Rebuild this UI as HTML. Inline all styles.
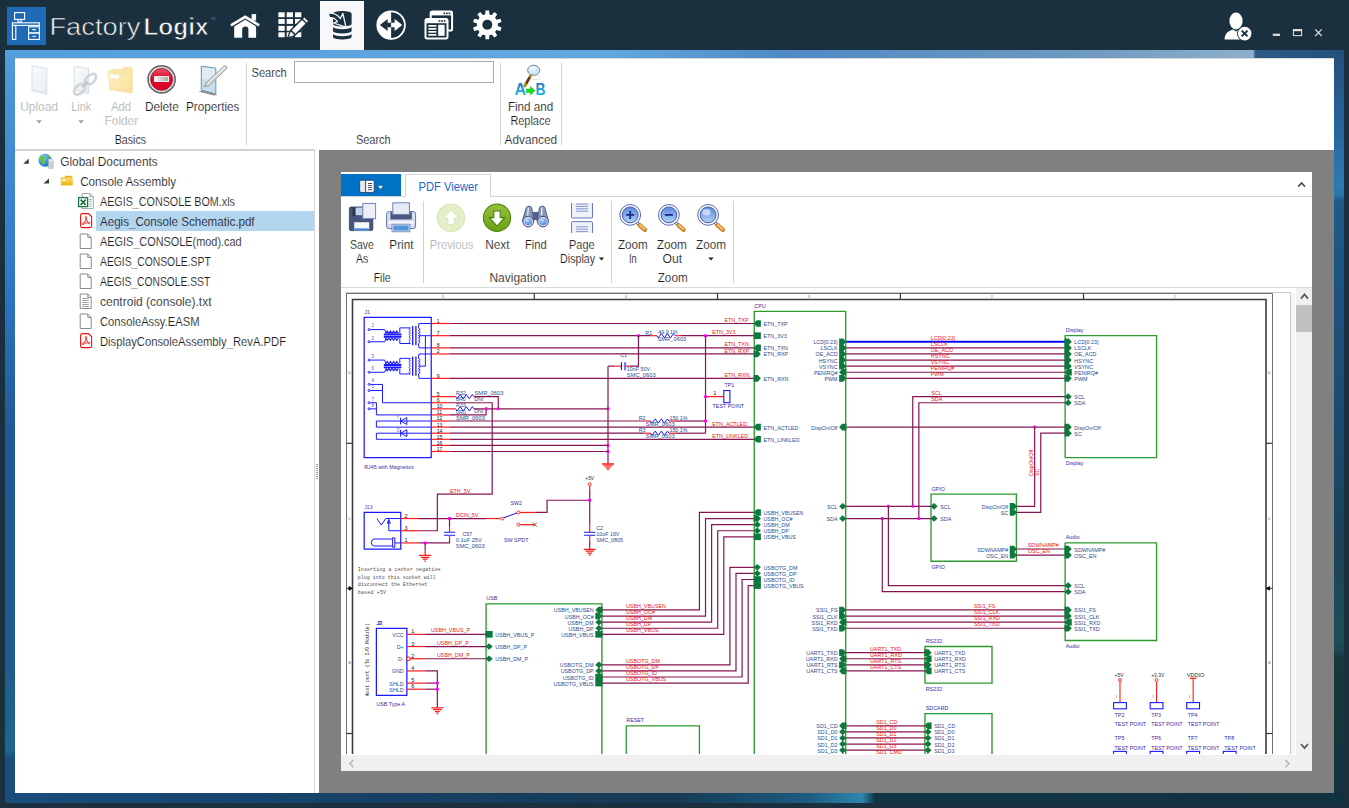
<!DOCTYPE html>
<html lang="en"><head><meta charset="utf-8"><title>FactoryLogix - Global Documents</title>
<style>
html,body{margin:0;padding:0;}
body{width:1349px;height:808px;overflow:hidden;background:#1a303e;font-family:"Liberation Sans",sans-serif;position:relative;}
.abs{position:absolute;}
#frame{left:5px;top:50px;width:1339px;height:753px;background:
 linear-gradient(180deg,rgba(0,0,0,0) 0%,rgba(8,30,50,.35) 45%,rgba(10,35,50,.78) 100%),
 linear-gradient(90deg,#549fde 0%,#63a8df 45%,#4f8ac6 58%,#6e99c0 80%,#8db0cc 93.2%,#2c5a86 93.4%,#24507c 100%);}
#frameL{left:5px;top:58px;width:10px;height:745px;background:linear-gradient(180deg,#4f9bdc 0%,#2f77c4 30%,#1f5a96 50%,#1d5c8c 80%,#1f6590 93%,#184d7c 94%,#184d7c 100%);}
#frameR{left:1334px;top:58px;width:10px;height:745px;background:linear-gradient(180deg,#25507d 0%,#27619a 8%,#2b7ab0 17%,#2a76ac 18.4%,#1f5a88 19.2%,#1c4f78 40%,#1b4a70 50%,#1a4258 65%,#1e4e56 78%,#1c4850 79.5%,#17383f 80.5%,#13323c 100%);}
#frameB{left:5px;top:793px;width:1339px;height:10px;background:linear-gradient(90deg,#184d7c 0%,#173f63 30%,#153a55 50%,#1d5c80 60%,#2f86ad 64%,#123546 65%,#10323f 100%);}
#content{left:15px;top:58px;width:1319px;height:735px;background:#fff;}
#grey{left:319px;top:150px;width:1015px;height:643px;background:#808080;}
#tree{left:15px;top:149px;width:299px;height:642px;background:#fff;border-top:2px solid #d2d2d2;border-right:1px solid #d6d6d6;box-sizing:content-box;}
#sel{left:96px;top:211px;width:218px;height:20px;background:#b4d5ee;}
#viewer{left:341px;top:172px;width:971px;height:599px;background:#fff;}
#vtabline{left:341px;top:196px;width:971px;height:1px;background:#d4d4d4;}
#vribline{left:341px;top:287px;width:971px;height:1px;background:#dadada;}
#bluebtn{left:341px;top:174px;width:60px;height:22px;background:#0072c6;}
#pdftab{left:405px;top:174px;width:84px;height:22px;background:#fff;border:1px solid #d4d4d4;border-bottom:none;box-sizing:content-box;}
#vscroll{left:1296px;top:288px;width:16px;height:467px;background:#f0f0f0;}
#vthumb{left:1296px;top:305.4px;width:16px;height:26.5px;background:#c1c1c1;}
#hscroll{left:341px;top:755px;width:971px;height:16px;background:#f0f0f0;}
#doc{left:345px;top:288px;width:951px;height:466px;border-bottom:1px solid #fff;background:#fff;overflow:hidden;}
svg{position:absolute;left:0;top:0;overflow:visible;}
text{font-family:"Liberation Sans",sans-serif;}
</style></head>
<body>
<div id="frame" class="abs"></div><div id="frameL" class="abs"></div><div id="frameR" class="abs"></div><div id="frameB" class="abs"></div>
<div id="content" class="abs"></div>
<div id="grey" class="abs"></div>
<div id="tree" class="abs"></div>
<div id="sel" class="abs"></div>
<div id="viewer" class="abs"></div><div id="vtabline" class="abs"></div><div id="vribline" class="abs"></div>
<div id="bluebtn" class="abs"></div><div id="pdftab" class="abs"></div>
<div id="vscroll" class="abs"></div><div id="vthumb" class="abs"></div><div id="hscroll" class="abs"></div>
<div id="doc" class="abs">
<svg width="1349" height="808" viewBox="0 0 1349 808" style="left:-345px;top:-288px">
<rect x="345" y="288" width="946" height="480" fill="#fff"/>
<rect x="1291" y="293" width="4" height="461" fill="#f5f5f5"/><path d="M345 292.5 H1290.5 V754" fill="none" stroke="#c9c9c9" stroke-width="1"/>
<path d="M346.5 770 V293.5 H1272.5 V770" fill="none" stroke="#6e6e6e" stroke-width="1"/>
<path d="M352.5 770 V299.5 H1266 V770" fill="none" stroke="#3c3c3c" stroke-width="1.6"/>
<path d="M534.3 293.5 V299.5" stroke="#333" stroke-width="1.2"/>
<path d="M717.5 293.5 V299.5" stroke="#333" stroke-width="1.2"/>
<path d="M900.4 293.5 V299.5" stroke="#333" stroke-width="1.2"/>
<path d="M1083.5 293.5 V299.5" stroke="#333" stroke-width="1.2"/>
<text transform="translate(443.00,298.20) scale(1,1)" font-size="3.2" fill="#555" text-anchor="middle" >5</text>
<text transform="translate(626.00,298.20) scale(1,1)" font-size="3.2" fill="#555" text-anchor="middle" >4</text>
<text transform="translate(809.00,298.20) scale(1,1)" font-size="3.2" fill="#555" text-anchor="middle" >3</text>
<text transform="translate(992.00,298.20) scale(1,1)" font-size="3.2" fill="#555" text-anchor="middle" >2</text>
<text transform="translate(1175.00,298.20) scale(1,1)" font-size="3.2" fill="#555" text-anchor="middle" >1</text>
<path d="M346.5 443.3 H352.5" stroke="#333" stroke-width="1.2"/>
<path d="M346.5 733.5 H352.5" stroke="#333" stroke-width="1.2"/>
<text transform="translate(349.50,374.20) scale(1,1)" font-size="3.4" fill="#555" text-anchor="middle" >D</text>
<text transform="translate(349.50,519.60) scale(1,1)" font-size="3.4" fill="#555" text-anchor="middle" >C</text>
<text transform="translate(349.50,664.40) scale(1,1)" font-size="3.4" fill="#555" text-anchor="middle" >B</text>
<path d="M1266 443.3 H1272.5" stroke="#333" stroke-width="1.2"/>
<path d="M1266 733.5 H1272.5" stroke="#333" stroke-width="1.2"/>
<text transform="translate(1269.25,374.20) scale(1,1)" font-size="3.4" fill="#555" text-anchor="middle" >D</text>
<text transform="translate(1269.25,519.60) scale(1,1)" font-size="3.4" fill="#555" text-anchor="middle" >C</text>
<text transform="translate(1269.25,664.40) scale(1,1)" font-size="3.4" fill="#555" text-anchor="middle" >B</text>
<path d="M346.5 588.4 H349 M352.4 588.4 L349 586.6 V590.2 Z" stroke="#000" stroke-width=".8" fill="#000"/>
<path d="M1272.5 588.4 H1270 M1266.2 588.4 L1269.6 586.6 V590.2 Z" stroke="#000" stroke-width=".8" fill="#000"/>
<path d="M364.19 457.59 V317.4 H431.24 V457.59 Z" fill="none" stroke="#1a1aff" stroke-width="1.25"/>
<text transform="translate(364.19,314.00) scale(0.95,1)" font-size="6.1" fill="#5a3ab0" text-anchor="start" >J1</text>
<text transform="translate(364.19,469.20) scale(0.96,1)" font-size="5.6" fill="#3a2aa0" text-anchor="start" >RJ45 with Magnetics</text>
<circle cx="369.1" cy="329.59" r="1.05" fill="#fff" stroke="#1a1aff" stroke-width=".9"/><circle cx="369.1" cy="341.78" r="1.05" fill="#fff" stroke="#1a1aff" stroke-width=".9"/><circle cx="369.1" cy="360.07" r="1.05" fill="#fff" stroke="#1a1aff" stroke-width=".9"/><circle cx="369.1" cy="372.26" r="1.05" fill="#fff" stroke="#1a1aff" stroke-width=".9"/><circle cx="369.1" cy="384.45" r="1.05" fill="#fff" stroke="#1a1aff" stroke-width=".9"/><circle cx="369.1" cy="390.54" r="1.05" fill="#fff" stroke="#1a1aff" stroke-width=".9"/><circle cx="369.1" cy="402.73" r="1.05" fill="#fff" stroke="#1a1aff" stroke-width=".9"/><circle cx="369.1" cy="408.83" r="1.05" fill="#fff" stroke="#1a1aff" stroke-width=".9"/><path d="M370.2 329.59 H384.6 L386 333.0849999999999 M370.2 341.78 H384.6 L386 338.28499999999997" fill="none" stroke="#1a1aff" stroke-width="1.0"/><path d="M383.8 334.48499999999996 H401.4 M383.8 336.88499999999993 H401.4" fill="none" stroke="#1a1aff" stroke-width="1.9"/><path d="M385.6 333.48499999999996 l1.6 -2.4 l1.6 2.4 l1.6 -2.4 l1.6 2.4 l1.6 -2.4 l1.6 2.4 l1.6 -2.4 l1.6 2.4" fill="none" stroke="#1a1aff" stroke-width="1.1"/><path d="M385.6 337.88499999999993 l1.6 2.4 l1.6 -2.4 l1.6 2.4 l1.6 -2.4 l1.6 2.4 l1.6 -2.4 l1.6 2.4 l1.6 -2.4" fill="none" stroke="#1a1aff" stroke-width="1.1"/><path d="M399.8 333.0849999999999 V327.88499999999993 H410.3 M399.8 338.28499999999997 V343.48499999999996 H410.3" fill="none" stroke="#1a1aff" stroke-width="1.0"/><path d="M410.3 327.88499999999993 q-2.4 1.3 0 2.6 q-2.4 1.3 0 2.6 q-2.4 1.3 0 2.6 q-2.4 1.3 0 2.6 q-2.4 1.3 0 2.6 q-2.4 1.3 0 2.6" fill="none" stroke="#1a1aff" stroke-width="0.9"/><path d="M412.7 326.0849999999999 V345.28499999999997 M415.9 326.0849999999999 V345.28499999999997" fill="none" stroke="#1a1aff" stroke-width="1.3"/><path d="M418.4 327.88499999999993 l1.8 1.3 l-1.8 1.3 l1.8 1.3 l-1.8 1.3 l1.8 1.3 l-1.8 1.3 l1.8 1.3 l-1.8 1.3 l1.8 1.3 l-1.8 1.3 l1.8 1.3 l-1.8 1.3" fill="none" stroke="#1a1aff" stroke-width="0.9"/><path d="M418.4 327.88499999999993 L419 323.5 H431.24 M418.4 343.48499999999996 L419 347.88 H431.24" fill="none" stroke="#1a1aff" stroke-width="1.0"/><path d="M370.2 360.07 H384.6 L386 363.56499999999994 M370.2 372.26 H384.6 L386 368.765" fill="none" stroke="#1a1aff" stroke-width="1.0"/><path d="M383.8 364.965 H401.4 M383.8 367.36499999999995 H401.4" fill="none" stroke="#1a1aff" stroke-width="1.9"/><path d="M385.6 363.965 l1.6 -2.4 l1.6 2.4 l1.6 -2.4 l1.6 2.4 l1.6 -2.4 l1.6 2.4 l1.6 -2.4 l1.6 2.4" fill="none" stroke="#1a1aff" stroke-width="1.1"/><path d="M385.6 368.36499999999995 l1.6 2.4 l1.6 -2.4 l1.6 2.4 l1.6 -2.4 l1.6 2.4 l1.6 -2.4 l1.6 2.4 l1.6 -2.4" fill="none" stroke="#1a1aff" stroke-width="1.1"/><path d="M399.8 363.56499999999994 V358.36499999999995 H410.3 M399.8 368.765 V373.965 H410.3" fill="none" stroke="#1a1aff" stroke-width="1.0"/><path d="M410.3 358.36499999999995 q-2.4 1.3 0 2.6 q-2.4 1.3 0 2.6 q-2.4 1.3 0 2.6 q-2.4 1.3 0 2.6 q-2.4 1.3 0 2.6 q-2.4 1.3 0 2.6" fill="none" stroke="#1a1aff" stroke-width="0.9"/><path d="M412.7 356.56499999999994 V375.765 M415.9 356.56499999999994 V375.765" fill="none" stroke="#1a1aff" stroke-width="1.3"/><path d="M418.4 358.36499999999995 l1.8 1.3 l-1.8 1.3 l1.8 1.3 l-1.8 1.3 l1.8 1.3 l-1.8 1.3 l1.8 1.3 l-1.8 1.3 l1.8 1.3 l-1.8 1.3 l1.8 1.3 l-1.8 1.3" fill="none" stroke="#1a1aff" stroke-width="0.9"/><path d="M418.4 358.36499999999995 L419 353.97 H431.24 M418.4 373.965 L419 378.35 H431.24" fill="none" stroke="#1a1aff" stroke-width="1.0"/><path d="M419.6 335.69 H431.24 M419.6 366.16 H425.4 V335.69" fill="none" stroke="#1a1aff" stroke-width="1.0"/><path d="M370.2 384.45 H382.5 V402.73 H431.24 M370.2 390.54 H382.5" fill="none" stroke="#1a1aff" stroke-width="1.0"/><path d="M370.2 402.73 H376.4 V414.92 H431.24 M370.2 408.83 H376.4" fill="none" stroke="#1a1aff" stroke-width="1.0"/><path d="M431.24 421.02 H376.4 V427.11 H431.24" fill="none" stroke="#1a1aff" stroke-width="1.0"/><path d="M400.8 421.02 L406.8 417.62 V424.41999999999996 Z M400.6 417.62 V424.41999999999996" fill="none" stroke="#1a1aff" stroke-width="1"/><text transform="translate(396.6,419.42) scale(.85,1)" font-size="4.6" fill="#6a4ad0">Y</text><path d="M431.24 433.21 H376.4 V439.3 H431.24" fill="none" stroke="#1a1aff" stroke-width="1.0"/><path d="M400.8 433.21 L406.8 429.81 V436.60999999999996 Z M400.6 429.81 V436.60999999999996" fill="none" stroke="#1a1aff" stroke-width="1"/><text transform="translate(396.6,431.61) scale(.85,1)" font-size="4.6" fill="#6a4ad0">G</text><text transform="translate(371.6,327.39) scale(.9,1)" font-size="5.2" fill="#7a4ad8">1</text><text transform="translate(371.6,339.58) scale(.9,1)" font-size="5.2" fill="#7a4ad8">2</text><text transform="translate(371.6,357.87) scale(.9,1)" font-size="5.2" fill="#7a4ad8">3</text><text transform="translate(371.6,370.06) scale(.9,1)" font-size="5.2" fill="#7a4ad8">6</text><text transform="translate(371.6,382.25) scale(.9,1)" font-size="5.2" fill="#7a4ad8">4</text><text transform="translate(371.6,388.34) scale(.9,1)" font-size="5.2" fill="#7a4ad8">5</text><text transform="translate(371.6,400.53) scale(.9,1)" font-size="5.2" fill="#7a4ad8">7</text><text transform="translate(371.6,406.63) scale(.9,1)" font-size="5.2" fill="#7a4ad8">8</text>
<polyline points="431.24,323.5 449.52,323.5" fill="none" stroke="#ff1a1a" stroke-width="1.2" />
<text transform="translate(436.64,322.90) scale(0.9,1)" font-size="5.8" fill="#2a1212" text-anchor="start" >1</text>
<polyline points="431.24,335.69 449.52,335.69" fill="none" stroke="#ff1a1a" stroke-width="1.2" />
<text transform="translate(436.64,335.09) scale(0.9,1)" font-size="5.8" fill="#2a1212" text-anchor="start" >7</text>
<polyline points="431.24,347.88 449.52,347.88" fill="none" stroke="#ff1a1a" stroke-width="1.2" />
<text transform="translate(436.64,347.28) scale(0.9,1)" font-size="5.8" fill="#2a1212" text-anchor="start" >8</text>
<polyline points="431.24,353.97 449.52,353.97" fill="none" stroke="#ff1a1a" stroke-width="1.2" />
<text transform="translate(436.64,353.37) scale(0.9,1)" font-size="5.8" fill="#2a1212" text-anchor="start" >2</text>
<polyline points="431.24,378.35 449.52,378.35" fill="none" stroke="#ff1a1a" stroke-width="1.2" />
<text transform="translate(436.64,377.75) scale(0.9,1)" font-size="5.8" fill="#2a1212" text-anchor="start" >9</text>
<polyline points="431.24,396.64 449.52,396.64" fill="none" stroke="#ff1a1a" stroke-width="1.2" />
<text transform="translate(436.64,396.04) scale(0.9,1)" font-size="5.8" fill="#2a1212" text-anchor="start" >5</text>
<polyline points="431.24,402.73 449.52,402.73" fill="none" stroke="#ff1a1a" stroke-width="1.2" />
<text transform="translate(436.64,402.13) scale(0.9,1)" font-size="5.8" fill="#2a1212" text-anchor="start" >6</text>
<polyline points="431.24,408.83 449.52,408.83" fill="none" stroke="#ff1a1a" stroke-width="1.2" />
<text transform="translate(436.64,408.23) scale(0.9,1)" font-size="5.8" fill="#2a1212" text-anchor="start" >10</text>
<polyline points="431.24,414.92 449.52,414.92" fill="none" stroke="#ff1a1a" stroke-width="1.2" />
<text transform="translate(436.64,414.32) scale(0.9,1)" font-size="5.8" fill="#2a1212" text-anchor="start" >11</text>
<polyline points="431.24,421.02 449.52,421.02" fill="none" stroke="#ff1a1a" stroke-width="1.2" />
<text transform="translate(436.64,420.42) scale(0.9,1)" font-size="5.8" fill="#2a1212" text-anchor="start" >12</text>
<polyline points="431.24,427.11 449.52,427.11" fill="none" stroke="#ff1a1a" stroke-width="1.2" />
<text transform="translate(436.64,426.51) scale(0.9,1)" font-size="5.8" fill="#2a1212" text-anchor="start" >13</text>
<polyline points="431.24,433.21 449.52,433.21" fill="none" stroke="#ff1a1a" stroke-width="1.2" />
<text transform="translate(436.64,432.61) scale(0.9,1)" font-size="5.8" fill="#2a1212" text-anchor="start" >14</text>
<polyline points="431.24,439.3 449.52,439.3" fill="none" stroke="#ff1a1a" stroke-width="1.2" />
<text transform="translate(436.64,438.70) scale(0.9,1)" font-size="5.8" fill="#2a1212" text-anchor="start" >15</text>
<polyline points="431.24,445.4 449.52,445.4" fill="none" stroke="#ff1a1a" stroke-width="1.2" />
<text transform="translate(436.64,444.80) scale(0.9,1)" font-size="5.8" fill="#2a1212" text-anchor="start" >16</text>
<polyline points="431.24,451.49 449.52,451.49" fill="none" stroke="#ff1a1a" stroke-width="1.2" />
<text transform="translate(436.64,450.89) scale(0.9,1)" font-size="5.8" fill="#2a1212" text-anchor="start" >17</text>
<polyline points="449.52,323.5 754.28,323.5" fill="none" stroke="#861652" stroke-width="1.2" />
<polyline points="449.52,335.69 650.66,335.69" fill="none" stroke="#861652" stroke-width="1.2" />
<polyline points="650.66,335.69 656.76,335.69" fill="none" stroke="#ff1a1a" stroke-width="1.2" />
<polyline points="656.76,335.69 658.28,337.79 661.33,333.59 664.38,337.79 667.43,333.59 670.48,337.79 673.53,333.59 675.05,335.69" fill="none" stroke="#1a1aff" stroke-width="1.0" />
<polyline points="675.05,335.69 681.14,335.69" fill="none" stroke="#ff1a1a" stroke-width="1.2" />
<polyline points="681.14,335.69 754.28,335.69" fill="none" stroke="#861652" stroke-width="1.2" />
<polyline points="449.52,347.88 754.28,347.88" fill="none" stroke="#861652" stroke-width="1.2" />
<polyline points="449.52,353.97 754.28,353.97" fill="none" stroke="#861652" stroke-width="1.2" />
<polyline points="449.52,378.35 754.28,378.35" fill="none" stroke="#861652" stroke-width="1.2" />
<rect x="636.97" y="334.19" width="3" height="3" rx=".8" fill="#ff00ff"/>
<rect x="704.02" y="334.19" width="3" height="3" rx=".8" fill="#ff00ff"/>
<text transform="translate(645.30,334.89) scale(0.88,1)" font-size="6.1" fill="#2a4a90" text-anchor="start" >R1</text>
<text transform="translate(658.20,334.49) scale(0.88,1)" font-size="6.1" fill="#2a4a90" text-anchor="start" >49.9 1%</text>
<text transform="translate(657.40,340.89) scale(0.95,1)" font-size="6.1" fill="#2a4a90" text-anchor="start" >SMR_0603</text>
<polyline points="608.0,366.16 615.31,366.16" fill="none" stroke="#861652" stroke-width="1.2" />
<polyline points="615.31,366.16 621.41,366.16" fill="none" stroke="#ff1a1a" stroke-width="1.2" />
<path d="M621.44 362.16v8 M625.04 362.16v8" stroke="#1a1aff" stroke-width="1.2" fill="none"/>
<polyline points="625.06,366.16 629.94,366.16" fill="none" stroke="#ff1a1a" stroke-width="1.2" />
<polyline points="629.94,366.16 638.47,366.16 638.47,335.69" fill="none" stroke="#861652" stroke-width="1.2" />
<text transform="translate(620.20,357.20) scale(0.88,1)" font-size="6.1" fill="#2a4a90" text-anchor="start" >C1</text>
<text transform="translate(626.80,370.80) scale(0.88,1)" font-size="6.1" fill="#2a4a90" text-anchor="start" >10nF 50V</text>
<text transform="translate(626.80,376.80) scale(0.95,1)" font-size="6.1" fill="#2a4a90" text-anchor="start" >SMC_0603</text>
<polyline points="608.0,366.16 608.0,463.68" fill="none" stroke="#861652" stroke-width="1.2" />
<path d="M602.0 463.98h12 M603.8 465.88h8.4 M605.6 467.78000000000003h4.8 M607.2 469.68h1.6" stroke="#ff1a1a" stroke-width="1.3" fill="none"/>
<rect x="606.50" y="407.33" width="3" height="3" rx=".8" fill="#ff00ff"/>
<rect x="606.50" y="443.90" width="3" height="3" rx=".8" fill="#ff00ff"/>
<rect x="606.50" y="449.99" width="3" height="3" rx=".8" fill="#ff00ff"/>
<polyline points="449.52,396.64 455.62,396.64" fill="none" stroke="#ff1a1a" stroke-width="1.2" />
<polyline points="455.62,396.64 457.14,398.84 460.19,394.44 463.24,398.84 466.28,394.44 469.33,398.84 472.38,394.44 473.9,396.64" fill="none" stroke="#1a1aff" stroke-width="1.0" />
<polyline points="473.9,396.64 498.28,396.64 498.28,408.83" fill="none" stroke="#861652" stroke-width="1.2" />
<polyline points="449.52,408.83 455.62,408.83" fill="none" stroke="#ff1a1a" stroke-width="1.2" />
<polyline points="455.62,408.83 457.14,411.03 460.19,406.63 463.24,411.03 466.28,406.63 469.33,411.03 472.38,406.63 473.9,408.83" fill="none" stroke="#1a1aff" stroke-width="1.0" />
<polyline points="473.9,408.83 608.0,408.83" fill="none" stroke="#861652" stroke-width="1.2" />
<polyline points="449.52,414.92 486.09,414.92 486.09,408.83" fill="none" stroke="#861652" stroke-width="1.2" />
<rect x="484.59" y="407.33" width="3" height="3" rx=".8" fill="#ff00ff"/>
<rect x="496.78" y="407.33" width="3" height="3" rx=".8" fill="#ff00ff"/>
<text transform="translate(456.02,395.04) scale(0.88,1)" font-size="6.1" fill="#2a4a90" text-anchor="start" >R32</text>
<text transform="translate(474.50,395.04) scale(0.95,1)" font-size="6.1" fill="#2a4a90" text-anchor="start" >SMR_0603</text>
<text transform="translate(456.02,401.33) scale(0.88,1)" font-size="6.1" fill="#2a4a90" text-anchor="start" >0R0</text>
<text transform="translate(474.20,400.93) scale(0.88,1)" font-size="6.1" fill="#2a4a90" text-anchor="start" >DNI</text>
<text transform="translate(456.02,407.23) scale(0.88,1)" font-size="6.1" fill="#2a4a90" text-anchor="start" >R33</text>
<text transform="translate(456.02,413.52) scale(0.88,1)" font-size="6.1" fill="#2a4a90" text-anchor="start" >0R0</text>
<text transform="translate(474.20,412.92) scale(0.88,1)" font-size="6.1" fill="#2a4a90" text-anchor="start" >DNI</text>
<text transform="translate(456.02,419.62) scale(0.95,1)" font-size="6.1" fill="#2a4a90" text-anchor="start" >SMR_0603</text>
<polyline points="449.52,402.73 492.19,402.73 492.19,494.16 437.33,494.16 437.33,530.73 419.05,530.73" fill="none" stroke="#861652" stroke-width="1.2" />
<text transform="translate(450.00,492.56) scale(0.88,1)" font-size="6.1" fill="#ee1414" text-anchor="start" >ETH_5V</text>
<polyline points="449.52,421.02 644.57,421.02" fill="none" stroke="#861652" stroke-width="1.2" />
<polyline points="644.57,421.02 650.66,421.02" fill="none" stroke="#ff1a1a" stroke-width="1.2" />
<polyline points="650.66,421.02 652.18,423.12 655.23,418.92 658.28,423.12 661.33,418.92 664.38,423.12 667.43,418.92 668.95,421.02" fill="none" stroke="#1a1aff" stroke-width="1.0" />
<polyline points="668.95,421.02 675.05,421.02" fill="none" stroke="#ff1a1a" stroke-width="1.2" />
<polyline points="675.05,421.02 705.52,421.02" fill="none" stroke="#861652" stroke-width="1.2" />
<polyline points="449.52,427.11 754.28,427.11" fill="none" stroke="#861652" stroke-width="1.2" />
<polyline points="449.52,433.21 644.57,433.21" fill="none" stroke="#861652" stroke-width="1.2" />
<polyline points="644.57,433.21 650.66,433.21" fill="none" stroke="#ff1a1a" stroke-width="1.2" />
<polyline points="650.66,433.21 652.18,435.31 655.23,431.11 658.28,435.31 661.33,431.11 664.38,435.31 667.43,431.11 668.95,433.21" fill="none" stroke="#1a1aff" stroke-width="1.0" />
<polyline points="668.95,433.21 675.05,433.21" fill="none" stroke="#ff1a1a" stroke-width="1.2" />
<polyline points="675.05,433.21 705.52,433.21" fill="none" stroke="#861652" stroke-width="1.2" />
<polyline points="449.52,439.3 754.28,439.3" fill="none" stroke="#861652" stroke-width="1.2" />
<polyline points="449.52,445.4 608.0,445.4" fill="none" stroke="#861652" stroke-width="1.2" />
<polyline points="449.52,451.49 608.0,451.49" fill="none" stroke="#861652" stroke-width="1.2" />
<polyline points="705.52,335.69 705.52,433.21" fill="none" stroke="#861652" stroke-width="1.2" />
<rect x="704.02" y="395.14" width="3" height="3" rx=".8" fill="#ff00ff"/>
<rect x="704.02" y="419.52" width="3" height="3" rx=".8" fill="#ff00ff"/>
<text transform="translate(638.67,419.62) scale(0.88,1)" font-size="6.1" fill="#2a4a90" text-anchor="start" >R2</text>
<text transform="translate(669.40,419.62) scale(0.88,1)" font-size="6.1" fill="#2a4a90" text-anchor="start" >150 1%</text>
<text transform="translate(645.80,425.82) scale(0.95,1)" font-size="6.1" fill="#2a4a90" text-anchor="start" >SMR_0603</text>
<text transform="translate(638.67,431.81) scale(0.88,1)" font-size="6.1" fill="#2a4a90" text-anchor="start" >R3</text>
<text transform="translate(669.40,431.81) scale(0.88,1)" font-size="6.1" fill="#2a4a90" text-anchor="start" >150 1%</text>
<text transform="translate(645.80,438.01) scale(0.95,1)" font-size="6.1" fill="#2a4a90" text-anchor="start" >SMR_0603</text>
<polyline points="705.52,396.64 723.81,396.64" fill="none" stroke="#ff1a1a" stroke-width="1.2" />
<rect x="723.81" y="390.54" width="6.0952" height="12.1904" fill="#fff" stroke="#1a1aff" stroke-width="1.1"/>
<text transform="translate(724.41,386.94) scale(0.88,1)" font-size="6.1" fill="#3a2aa0" text-anchor="start" >TP1</text>
<text transform="translate(712.60,407.60) scale(0.88,1)" font-size="6.1" fill="#3a2aa0" text-anchor="start" >TEST POINT</text>
<text transform="translate(713.22,395.44) scale(0.9,1)" font-size="6.2" fill="#2a1212" text-anchor="start" >1</text>
<text transform="translate(724.40,322.10) scale(0.88,1)" font-size="6.1" fill="#ee1414" text-anchor="start" >ETN_TXP</text>
<text transform="translate(712.20,334.29) scale(0.88,1)" font-size="6.1" fill="#ee1414" text-anchor="start" >ETN_3V3</text>
<text transform="translate(724.40,346.48) scale(0.88,1)" font-size="6.1" fill="#ee1414" text-anchor="start" >ETN_TXN</text>
<text transform="translate(724.40,352.57) scale(0.88,1)" font-size="6.1" fill="#ee1414" text-anchor="start" >ETN_RXP</text>
<text transform="translate(724.40,376.95) scale(0.88,1)" font-size="6.1" fill="#ee1414" text-anchor="start" >ETN_RXN</text>
<text transform="translate(712.20,425.71) scale(0.88,1)" font-size="6.1" fill="#ee1414" text-anchor="start" >ETN_ACTLED</text>
<text transform="translate(712.20,437.90) scale(0.88,1)" font-size="6.1" fill="#ee1414" text-anchor="start" >ETN_LINKLED</text>
<path d="M364.19 549.02 V512.45 H400.76 V549.02 Z" fill="none" stroke="#1a1aff" stroke-width="1.25"/>
<text transform="translate(364.19,509.05) scale(0.88,1)" font-size="6.1" fill="#5a3ab0" text-anchor="start" >J13</text>
<path d="M376.8 518.54 L381.3 525 L385.8 518.54 H400.76 M388.8 520.6 V530.73 H400.76 M388.8 519.4 l-1.5 3.8 h3 z" fill="none" stroke="#1a1aff" stroke-width="1"/>
<path d="M392.4 539 H374 a3.6 3.6 0 0 0 0 7 H392.4 M392.6 537.8 h2.2 v9.4 h-2.2 z M394.8 542.92 H400.76" fill="none" stroke="#1a1aff" stroke-width="1"/>
<polyline points="400.76,518.54 419.05,518.54" fill="none" stroke="#ff1a1a" stroke-width="1.2" />
<text transform="translate(404.56,517.54) scale(0.9,1)" font-size="6.2" fill="#2a1212" text-anchor="start" >2</text>
<polyline points="400.76,530.73 419.05,530.73" fill="none" stroke="#ff1a1a" stroke-width="1.2" />
<text transform="translate(404.56,529.73) scale(0.9,1)" font-size="6.2" fill="#2a1212" text-anchor="start" >3</text>
<polyline points="400.76,542.92 419.05,542.92" fill="none" stroke="#ff1a1a" stroke-width="1.2" />
<text transform="translate(404.56,541.92) scale(0.9,1)" font-size="6.2" fill="#2a1212" text-anchor="start" >1</text>
<polyline points="419.05,518.54 486.09,518.54" fill="none" stroke="#861652" stroke-width="1.2" />
<rect x="448.02" y="517.04" width="3" height="3" rx=".8" fill="#ff00ff"/>
<text transform="translate(455.80,517.14) scale(0.88,1)" font-size="6.1" fill="#ee1414" text-anchor="start" >DCIN_5V</text>
<polyline points="486.09,518.54 500.72,518.54" fill="none" stroke="#ff1a1a" stroke-width="1.2" />
<path d="M503.25 517.9399999999999 L517.4 512.85" stroke="#1a1aff" stroke-width="1.1"/>
<circle cx="502.25" cy="518.54" r="1.5" fill="#fff" stroke="#ff1a1a" stroke-width=".9"/>
<circle cx="518.4" cy="512.45" r="1.5" fill="#fff" stroke="#ff1a1a" stroke-width=".9"/>
<circle cx="518.4" cy="524.64" r="1.5" fill="#fff" stroke="#ff1a1a" stroke-width=".9"/>
<polyline points="519.92,512.45 534.86,512.45" fill="none" stroke="#ff1a1a" stroke-width="1.2" />
<polyline points="519.92,524.64 534.86,524.64" fill="none" stroke="#ff1a1a" stroke-width="1.2" />
<path d="M532.86 522.64 l4 4 m0 -4 l-4 4" stroke="#8a5a1a" stroke-width="1"/>
<polyline points="534.86,512.45 547.05,512.45 547.05,500.26 589.71,500.26" fill="none" stroke="#861652" stroke-width="1.2" />
<text transform="translate(510.40,504.60) scale(0.88,1)" font-size="6.1" fill="#3a2aa0" text-anchor="start" >SW2</text>
<text transform="translate(504.00,541.80) scale(0.88,1)" font-size="6.1" fill="#3a2aa0" text-anchor="start" >SW SPDT</text>
<circle cx="589.71" cy="484.2" r="1.5" fill="#fff" stroke="#ff1a1a" stroke-width=".9"/>
<polyline points="589.71,485.93 589.71,489.28" fill="none" stroke="#ff1a1a" stroke-width="1.2" />
<polyline points="589.71,489.28 589.71,500.26" fill="none" stroke="#861652" stroke-width="1.2" />
<rect x="588.21" y="498.76" width="3" height="3" rx=".8" fill="#ff00ff"/>
<text transform="translate(589.71,480.40) scale(0.88,1)" font-size="5.6" fill="#2a2a2a" text-anchor="middle" >+5V</text>
<polyline points="589.71,500.26 589.71,524.64" fill="none" stroke="#861652" stroke-width="1.2" />
<polyline points="589.71,524.64 589.71,531.95" fill="none" stroke="#ff1a1a" stroke-width="1.2" />
<path d="M584.11 532.28h11.2 M584.11 535.28h11.2" stroke="#1a1aff" stroke-width="1.1" fill="none"/>
<polyline points="589.71,535.61 589.71,540.48" fill="none" stroke="#ff1a1a" stroke-width="1.2" />
<polyline points="589.71,540.48 589.71,549.02" fill="none" stroke="#861652" stroke-width="1.2" />
<path d="M583.71 549.3199999999999h12 M585.51 551.22h8.4 M587.3100000000001 553.12h4.8 M588.9100000000001 555.02h1.6" stroke="#ff1a1a" stroke-width="1.3" fill="none"/>
<text transform="translate(596.20,529.60) scale(0.88,1)" font-size="6.1" fill="#2a4a90" text-anchor="start" >C2</text>
<text transform="translate(596.20,535.80) scale(0.88,1)" font-size="6.1" fill="#2a4a90" text-anchor="start" >10uF 16V</text>
<text transform="translate(596.20,541.80) scale(0.88,1)" font-size="6.1" fill="#2a4a90" text-anchor="start" >SMC_0805</text>
<polyline points="449.52,518.54 449.52,527.07" fill="none" stroke="#861652" stroke-width="1.2" />
<polyline points="449.52,527.07 449.52,531.95" fill="none" stroke="#ff1a1a" stroke-width="1.2" />
<path d="M443.91999999999996 532.28h11.2 M443.91999999999996 535.28h11.2" stroke="#1a1aff" stroke-width="1.1" fill="none"/>
<polyline points="449.52,535.61 449.52,539.27" fill="none" stroke="#ff1a1a" stroke-width="1.2" />
<polyline points="449.52,539.27 449.52,542.92 419.05,542.92" fill="none" stroke="#861652" stroke-width="1.2" />
<rect x="423.64" y="541.42" width="3" height="3" rx=".8" fill="#ff00ff"/>
<polyline points="425.14,542.92 425.14,550.24" fill="none" stroke="#861652" stroke-width="1.2" />
<polyline points="425.14,550.24 425.14,555.11" fill="none" stroke="#ff1a1a" stroke-width="1.2" />
<path d="M419.14 555.41h12 M420.94 557.3100000000001h8.4 M422.74 559.21h4.8 M424.34 561.11h1.6" stroke="#ff1a1a" stroke-width="1.3" fill="none"/>
<text transform="translate(462.50,535.80) scale(0.88,1)" font-size="6.1" fill="#2a4a90" text-anchor="start" >C57</text>
<text transform="translate(455.80,541.80) scale(0.92,1)" font-size="6.1" fill="#2a4a90" text-anchor="start" >0.1uF 25V</text>
<text transform="translate(455.80,547.90) scale(0.95,1)" font-size="6.1" fill="#2a4a90" text-anchor="start" >SMC_0603</text>
<text x="357.8" y="571.0" font-size="4.9" fill="#4a4a4a" style="font-family:'Liberation Mono',monospace" textLength="82.6" lengthAdjust="spacing">Inserting a center negative</text>
<text x="357.8" y="578.6" font-size="4.9" fill="#4a4a4a" style="font-family:'Liberation Mono',monospace" textLength="78" lengthAdjust="spacing">plug into this socket will</text>
<text x="357.8" y="586.2" font-size="4.9" fill="#4a4a4a" style="font-family:'Liberation Mono',monospace" textLength="69.4" lengthAdjust="spacing">disconnect the Ethernet</text>
<text x="357.8" y="593.8" font-size="4.9" fill="#4a4a4a" style="font-family:'Liberation Mono',monospace" textLength="28.2" lengthAdjust="spacing">based +5V</text>
<path d="M486.09 770 V603.87 H601.9 V770" fill="none" stroke="#2f9a2f" stroke-width="1.35"/>
<text transform="translate(486.29,599.67) scale(0.88,1)" font-size="6.1" fill="#3a2aa0" text-anchor="start" >USB</text>
<polygon points="602.50,606.67 598.40,606.67 595.30,609.97 598.40,613.27 602.50,613.27" fill="#0c7a3c"/>
<text transform="translate(593.70,612.47) scale(0.88,1)" font-size="6.1" fill="#2a4a90" text-anchor="end" >USBH_VBUSEN</text>
<polygon points="602.50,616.06 599.40,612.76 595.30,612.76 595.30,619.36 599.40,619.36" fill="#0c7a3c"/>
<text transform="translate(593.70,618.56) scale(0.88,1)" font-size="6.1" fill="#2a4a90" text-anchor="end" >USBH_OC#</text>
<polygon points="602.50,622.16 598.90,618.86 595.30,622.16 598.90,625.46" fill="#0c7a3c"/>
<text transform="translate(593.70,624.66) scale(0.88,1)" font-size="6.1" fill="#2a4a90" text-anchor="end" >USBH_DM</text>
<polygon points="602.50,628.26 598.90,624.96 595.30,628.26 598.90,631.56" fill="#0c7a3c"/>
<text transform="translate(593.70,630.76) scale(0.88,1)" font-size="6.1" fill="#2a4a90" text-anchor="end" >USBH_DP</text>
<polygon points="602.50,631.05 595.30,631.05 595.30,637.65 602.50,637.65" fill="#0c7a3c"/>
<text transform="translate(593.70,636.85) scale(0.88,1)" font-size="6.1" fill="#2a4a90" text-anchor="end" >USBH_VBUS</text>
<polygon points="602.50,664.83 598.90,661.53 595.30,664.83 598.90,668.13" fill="#0c7a3c"/>
<text transform="translate(593.70,667.33) scale(0.88,1)" font-size="6.1" fill="#2a4a90" text-anchor="end" >USBOTG_DM</text>
<polygon points="602.50,670.92 598.90,667.62 595.30,670.92 598.90,674.22" fill="#0c7a3c"/>
<text transform="translate(593.70,673.42) scale(0.88,1)" font-size="6.1" fill="#2a4a90" text-anchor="end" >USBOTG_DP</text>
<polygon points="602.50,673.72 595.30,673.72 595.30,680.32 602.50,680.32" fill="#0c7a3c"/>
<text transform="translate(593.70,679.52) scale(0.88,1)" font-size="6.1" fill="#2a4a90" text-anchor="end" >USBOTG_ID</text>
<polygon points="602.50,679.81 595.30,679.81 595.30,686.41 602.50,686.41" fill="#0c7a3c"/>
<text transform="translate(593.70,685.61) scale(0.88,1)" font-size="6.1" fill="#2a4a90" text-anchor="end" >USBOTG_VBUS</text>
<polyline points="601.9,609.97 699.43,609.97 699.43,512.45 754.28,512.45" fill="none" stroke="#861652" stroke-width="1.2" />
<polyline points="601.9,616.06 705.52,616.06 705.52,518.54 754.28,518.54" fill="none" stroke="#861652" stroke-width="1.2" />
<polyline points="601.9,622.16 711.62,622.16 711.62,524.64 754.28,524.64" fill="none" stroke="#861652" stroke-width="1.2" />
<polyline points="601.9,628.26 717.71,628.26 717.71,530.73 754.28,530.73" fill="none" stroke="#861652" stroke-width="1.2" />
<polyline points="601.9,634.35 723.81,634.35 723.81,536.83 754.28,536.83" fill="none" stroke="#861652" stroke-width="1.2" />
<polyline points="601.9,664.83 729.9,664.83 729.9,567.3 754.28,567.3" fill="none" stroke="#861652" stroke-width="1.2" />
<polyline points="601.9,670.92 736.0,670.92 736.0,573.4 754.28,573.4" fill="none" stroke="#861652" stroke-width="1.2" />
<polyline points="601.9,677.02 742.09,677.02 742.09,579.49 754.28,579.49" fill="none" stroke="#861652" stroke-width="1.2" />
<polyline points="601.9,683.11 748.19,683.11 748.19,585.59 754.28,585.59" fill="none" stroke="#861652" stroke-width="1.2" />
<text transform="translate(626.00,608.07) scale(0.88,1)" font-size="6.1" fill="#ee1414" text-anchor="start" >USBH_VBUSEN</text>
<text transform="translate(626.00,614.16) scale(0.88,1)" font-size="6.1" fill="#ee1414" text-anchor="start" >USBH_OC#</text>
<text transform="translate(626.00,620.26) scale(0.88,1)" font-size="6.1" fill="#ee1414" text-anchor="start" >USBH_DM</text>
<text transform="translate(626.00,626.36) scale(0.88,1)" font-size="6.1" fill="#ee1414" text-anchor="start" >USBH_DP</text>
<text transform="translate(626.00,632.45) scale(0.88,1)" font-size="6.1" fill="#ee1414" text-anchor="start" >USBH_VBUS</text>
<text transform="translate(626.00,662.93) scale(0.88,1)" font-size="6.1" fill="#ee1414" text-anchor="start" >USBOTG_DM</text>
<text transform="translate(626.00,669.02) scale(0.88,1)" font-size="6.1" fill="#ee1414" text-anchor="start" >USBOTG_DP</text>
<text transform="translate(626.00,675.12) scale(0.88,1)" font-size="6.1" fill="#ee1414" text-anchor="start" >USBOTG_ID</text>
<text transform="translate(626.00,681.21) scale(0.88,1)" font-size="6.1" fill="#ee1414" text-anchor="start" >USBOTG_VBUS</text>
<polygon points="485.49,631.05 492.69,631.05 492.69,637.65 485.49,637.65" fill="#0c7a3c"/>
<text transform="translate(495.29,636.85) scale(0.88,1)" font-size="6.1" fill="#2a4a90" text-anchor="start" >USBH_VBUS_P</text>
<polygon points="485.49,646.54 489.09,643.24 492.69,646.54 489.09,649.84" fill="#0c7a3c"/>
<text transform="translate(495.29,649.04) scale(0.88,1)" font-size="6.1" fill="#2a4a90" text-anchor="start" >USBH_DP_P</text>
<polygon points="485.49,658.73 489.09,655.43 492.69,658.73 489.09,662.03" fill="#0c7a3c"/>
<text transform="translate(495.29,661.23) scale(0.88,1)" font-size="6.1" fill="#2a4a90" text-anchor="start" >USBH_DM_P</text>
<path d="M376.38 695.3 V628.26 H406.86 V695.3 Z" fill="none" stroke="#1a1aff" stroke-width="1.25"/>
<text transform="translate(376.38,625.06) scale(0.88,1)" font-size="6.1" fill="#2a1a90" text-anchor="start" font-weight="bold">J2</text>
<text transform="translate(376.38,705.80) scale(0.88,1)" font-size="6.1" fill="#3a2aa0" text-anchor="start" >USB Type A</text>
<text transform="translate(368.80,696.60) rotate(-90) scale(0.98,1)" font-size="5" fill="#222" text-anchor="start" style="font-family:'Liberation Mono',monospace">Host port (To I/O Module)</text>
<text transform="translate(403.66,636.85) scale(0.88,1)" font-size="6.1" fill="#2a4a90" text-anchor="end" >VCC</text>
<polyline points="406.86,634.35 425.14,634.35" fill="none" stroke="#ff1a1a" stroke-width="1.2" />
<text transform="translate(411.26,633.35) scale(0.9,1)" font-size="6.2" fill="#2a1212" text-anchor="start" >1</text>
<text transform="translate(403.66,649.04) scale(0.88,1)" font-size="6.1" fill="#2a4a90" text-anchor="end" >D+</text>
<polyline points="406.86,646.54 425.14,646.54" fill="none" stroke="#ff1a1a" stroke-width="1.2" />
<text transform="translate(411.26,645.54) scale(0.9,1)" font-size="6.2" fill="#2a1212" text-anchor="start" >3</text>
<text transform="translate(403.66,661.23) scale(0.88,1)" font-size="6.1" fill="#2a4a90" text-anchor="end" >D-</text>
<polyline points="406.86,658.73 425.14,658.73" fill="none" stroke="#ff1a1a" stroke-width="1.2" />
<text transform="translate(411.26,657.73) scale(0.9,1)" font-size="6.2" fill="#2a1212" text-anchor="start" >2</text>
<text transform="translate(403.66,673.42) scale(0.88,1)" font-size="6.1" fill="#2a4a90" text-anchor="end" >GND</text>
<polyline points="406.86,670.92 425.14,670.92" fill="none" stroke="#ff1a1a" stroke-width="1.2" />
<text transform="translate(411.26,669.92) scale(0.9,1)" font-size="6.2" fill="#2a1212" text-anchor="start" >4</text>
<text transform="translate(403.66,685.61) scale(0.88,1)" font-size="6.1" fill="#2a4a90" text-anchor="end" >SHLD</text>
<polyline points="406.86,683.11 425.14,683.11" fill="none" stroke="#ff1a1a" stroke-width="1.2" />
<text transform="translate(411.26,682.11) scale(0.9,1)" font-size="6.2" fill="#2a1212" text-anchor="start" >5</text>
<text transform="translate(403.66,691.71) scale(0.88,1)" font-size="6.1" fill="#2a4a90" text-anchor="end" >SHLD</text>
<polyline points="406.86,689.21 425.14,689.21" fill="none" stroke="#ff1a1a" stroke-width="1.2" />
<text transform="translate(411.26,688.21) scale(0.9,1)" font-size="6.2" fill="#2a1212" text-anchor="start" >6</text>
<circle cx="408.56" cy="658.73" r="1.8" fill="#fff" stroke="#ff1a1a" stroke-width="1.1"/>
<polyline points="425.14,634.35 486.09,634.35" fill="none" stroke="#861652" stroke-width="1.2" />
<polyline points="425.14,646.54 486.09,646.54" fill="none" stroke="#861652" stroke-width="1.2" />
<polyline points="425.14,658.73 486.09,658.73" fill="none" stroke="#861652" stroke-width="1.2" />
<polyline points="425.14,670.92 437.33,670.92 437.33,707.49" fill="none" stroke="#861652" stroke-width="1.2" />
<path d="M431.33 707.79h12 M433.13 709.69h8.4 M434.93 711.59h4.8 M436.53 713.49h1.6" stroke="#ff1a1a" stroke-width="1.3" fill="none"/>
<polyline points="425.14,683.11 437.33,683.11" fill="none" stroke="#861652" stroke-width="1.2" />
<polyline points="425.14,689.21 437.33,689.21" fill="none" stroke="#861652" stroke-width="1.2" />
<rect x="435.83" y="681.61" width="3" height="3" rx=".8" fill="#ff00ff"/>
<rect x="435.83" y="687.71" width="3" height="3" rx=".8" fill="#ff00ff"/>
<text transform="translate(431.00,631.95) scale(0.88,1)" font-size="6.1" fill="#ee1414" text-anchor="start" >USBH_VBUS_P</text>
<text transform="translate(437.00,644.54) scale(0.88,1)" font-size="6.1" fill="#ee1414" text-anchor="start" >USBH_DP_P</text>
<text transform="translate(437.00,656.73) scale(0.88,1)" font-size="6.1" fill="#ee1414" text-anchor="start" >USBH_DM_P</text>
<path d="M1065.14 457.59 V335.69 H1156.57 V457.59 Z" fill="none" stroke="#2f9a2f" stroke-width="1.35"/>
<text transform="translate(1065.74,332.09) scale(0.88,1)" font-size="6.1" fill="#3a2aa0" text-anchor="start" >Display</text>
<text transform="translate(1065.74,465.19) scale(0.88,1)" font-size="6.1" fill="#3a2aa0" text-anchor="start" >Display</text>
<polyline points="845.71,341.78 1065.14,341.78" fill="none" stroke="#0808ff" stroke-width="1.9" />
<polygon points="1064.54,338.48 1068.64,338.48 1071.74,341.78 1068.64,345.08 1064.54,345.08" fill="#0c7a3c"/>
<text transform="translate(1074.34,344.28) scale(0.88,1)" font-size="6.1" fill="#2a4a90" text-anchor="start" >LCD[0:23]</text>
<text transform="translate(930.80,339.88) scale(0.88,1)" font-size="6.1" fill="#ee1414" text-anchor="start" >LCD[0:23]</text>
<polyline points="845.71,347.88 1065.14,347.88" fill="none" stroke="#861652" stroke-width="1.2" />
<polygon points="1064.54,344.58 1068.64,344.58 1071.74,347.88 1068.64,351.18 1064.54,351.18" fill="#0c7a3c"/>
<text transform="translate(1074.34,350.38) scale(0.88,1)" font-size="6.1" fill="#2a4a90" text-anchor="start" >LSCLK</text>
<text transform="translate(930.80,345.98) scale(0.88,1)" font-size="6.1" fill="#ee1414" text-anchor="start" >LSCLK</text>
<polyline points="845.71,353.97 1065.14,353.97" fill="none" stroke="#861652" stroke-width="1.2" />
<polygon points="1064.54,350.67 1068.64,350.67 1071.74,353.97 1068.64,357.27 1064.54,357.27" fill="#0c7a3c"/>
<text transform="translate(1074.34,356.47) scale(0.88,1)" font-size="6.1" fill="#2a4a90" text-anchor="start" >OE_ACD</text>
<text transform="translate(930.80,352.07) scale(0.88,1)" font-size="6.1" fill="#ee1414" text-anchor="start" >OE_ACD</text>
<polyline points="845.71,360.07 1065.14,360.07" fill="none" stroke="#861652" stroke-width="1.2" />
<polygon points="1064.54,356.77 1068.64,356.77 1071.74,360.07 1068.64,363.37 1064.54,363.37" fill="#0c7a3c"/>
<text transform="translate(1074.34,362.57) scale(0.88,1)" font-size="6.1" fill="#2a4a90" text-anchor="start" >HSYNC</text>
<text transform="translate(930.80,358.17) scale(0.88,1)" font-size="6.1" fill="#ee1414" text-anchor="start" >HSYNC</text>
<polyline points="845.71,366.16 1065.14,366.16" fill="none" stroke="#861652" stroke-width="1.2" />
<polygon points="1064.54,362.86 1068.64,362.86 1071.74,366.16 1068.64,369.46 1064.54,369.46" fill="#0c7a3c"/>
<text transform="translate(1074.34,368.66) scale(0.88,1)" font-size="6.1" fill="#2a4a90" text-anchor="start" >VSYNC</text>
<text transform="translate(930.80,364.26) scale(0.88,1)" font-size="6.1" fill="#ee1414" text-anchor="start" >VSYNC</text>
<polyline points="845.71,372.26 1065.14,372.26" fill="none" stroke="#861652" stroke-width="1.2" />
<polygon points="1064.54,372.26 1067.64,368.96 1071.74,368.96 1071.74,375.56 1067.64,375.56" fill="#0c7a3c"/>
<text transform="translate(1074.34,374.76) scale(0.88,1)" font-size="6.1" fill="#2a4a90" text-anchor="start" >PENIRQ#</text>
<text transform="translate(930.80,370.36) scale(0.88,1)" font-size="6.1" fill="#ee1414" text-anchor="start" >PENIRQ#</text>
<polyline points="845.71,378.35 1065.14,378.35" fill="none" stroke="#861652" stroke-width="1.2" />
<polygon points="1064.54,375.05 1068.64,375.05 1071.74,378.35 1068.64,381.65 1064.54,381.65" fill="#0c7a3c"/>
<text transform="translate(1074.34,380.85) scale(0.88,1)" font-size="6.1" fill="#2a4a90" text-anchor="start" >PWM</text>
<text transform="translate(930.80,376.45) scale(0.88,1)" font-size="6.1" fill="#ee1414" text-anchor="start" >PWM</text>
<polygon points="1064.54,396.64 1068.14,393.34 1071.74,396.64 1068.14,399.94" fill="#0c7a3c"/>
<text transform="translate(1074.34,399.14) scale(0.88,1)" font-size="6.1" fill="#2a4a90" text-anchor="start" >SCL</text>
<polygon points="1064.54,402.73 1068.14,399.43 1071.74,402.73 1068.14,406.03" fill="#0c7a3c"/>
<text transform="translate(1074.34,405.23) scale(0.88,1)" font-size="6.1" fill="#2a4a90" text-anchor="start" >SDA</text>
<polygon points="1064.54,423.81 1068.64,423.81 1071.74,427.11 1068.64,430.41 1064.54,430.41" fill="#0c7a3c"/>
<text transform="translate(1074.34,429.61) scale(0.88,1)" font-size="6.1" fill="#2a4a90" text-anchor="start" >DispOn/Off</text>
<polygon points="1064.54,429.91 1068.64,429.91 1071.74,433.21 1068.64,436.51 1064.54,436.51" fill="#0c7a3c"/>
<text transform="translate(1074.34,435.71) scale(0.88,1)" font-size="6.1" fill="#2a4a90" text-anchor="start" >SC</text>
<polyline points="912.76,506.35 912.76,396.64 1065.14,396.64" fill="none" stroke="#861652" stroke-width="1.2" />
<polyline points="918.85,518.54 918.85,402.73 1065.14,402.73" fill="none" stroke="#861652" stroke-width="1.2" />
<text transform="translate(931.20,395.04) scale(0.88,1)" font-size="6.1" fill="#ee1414" text-anchor="start" >SCL</text>
<text transform="translate(931.20,401.13) scale(0.88,1)" font-size="6.1" fill="#ee1414" text-anchor="start" >SDA</text>
<polyline points="845.71,427.11 1065.14,427.11" fill="none" stroke="#861652" stroke-width="1.2" />
<rect x="1033.16" y="425.61" width="3" height="3" rx=".8" fill="#ff00ff"/>
<polyline points="1034.66,427.11 1034.66,506.35 1016.38,506.35" fill="none" stroke="#861652" stroke-width="1.2" />
<polyline points="1065.14,433.21 1040.76,433.21 1040.76,512.45 1016.38,512.45" fill="none" stroke="#861652" stroke-width="1.2" />
<text transform="translate(1032.60,476.00) rotate(-90) scale(0.88,1)" font-size="6.1" fill="#ee1414" text-anchor="start" >DispOn/Off</text>
<text transform="translate(1039.00,476.00) rotate(-90) scale(0.88,1)" font-size="6.1" fill="#ee1414" text-anchor="start" >SC</text>
<path d="M931.04 561.21 V494.16 H1016.38 V561.21 Z" fill="none" stroke="#2f9a2f" stroke-width="1.35"/>
<text transform="translate(931.44,490.76) scale(0.88,1)" font-size="6.1" fill="#3a2aa0" text-anchor="start" >GPIO</text>
<text transform="translate(931.44,569.01) scale(0.88,1)" font-size="6.1" fill="#3a2aa0" text-anchor="start" >GPIO</text>
<polygon points="930.44,506.35 934.04,503.05 937.64,506.35 934.04,509.65" fill="#0c7a3c"/>
<text transform="translate(940.24,508.85) scale(0.88,1)" font-size="6.1" fill="#2a4a90" text-anchor="start" >SCL</text>
<polygon points="930.44,518.54 934.04,515.24 937.64,518.54 934.04,521.84" fill="#0c7a3c"/>
<text transform="translate(940.24,521.04) scale(0.88,1)" font-size="6.1" fill="#2a4a90" text-anchor="start" >SDA</text>
<polygon points="1016.98,506.35 1013.88,503.05 1009.78,503.05 1009.78,509.65 1013.88,509.65" fill="#0c7a3c"/>
<text transform="translate(1008.18,508.85) scale(0.88,1)" font-size="6.1" fill="#2a4a90" text-anchor="end" >DispOn/Off</text>
<polygon points="1016.98,512.45 1013.88,509.15 1009.78,509.15 1009.78,515.75 1013.88,515.75" fill="#0c7a3c"/>
<text transform="translate(1008.18,514.95) scale(0.88,1)" font-size="6.1" fill="#2a4a90" text-anchor="end" >SC</text>
<polygon points="1016.98,549.02 1013.88,545.72 1009.78,545.72 1009.78,552.32 1013.88,552.32" fill="#0c7a3c"/>
<text transform="translate(1008.18,551.52) scale(0.88,1)" font-size="6.1" fill="#2a4a90" text-anchor="end" >SDWNAMP#</text>
<polygon points="1016.98,555.11 1013.88,551.81 1009.78,551.81 1009.78,558.41 1013.88,558.41" fill="#0c7a3c"/>
<text transform="translate(1008.18,557.61) scale(0.88,1)" font-size="6.1" fill="#2a4a90" text-anchor="end" >OSC_EN</text>
<polyline points="845.71,506.35 931.04,506.35" fill="none" stroke="#861652" stroke-width="1.2" />
<polyline points="845.71,518.54 931.04,518.54" fill="none" stroke="#861652" stroke-width="1.2" />
<rect x="886.88" y="504.85" width="3" height="3" rx=".8" fill="#ff00ff"/>
<rect x="911.26" y="504.85" width="3" height="3" rx=".8" fill="#ff00ff"/>
<rect x="880.78" y="517.04" width="3" height="3" rx=".8" fill="#ff00ff"/>
<rect x="917.35" y="517.04" width="3" height="3" rx=".8" fill="#ff00ff"/>
<polyline points="888.38,506.35 888.38,585.59 1065.14,585.59" fill="none" stroke="#861652" stroke-width="1.2" />
<polyline points="882.28,518.54 882.28,591.68 1065.14,591.68" fill="none" stroke="#861652" stroke-width="1.2" />
<polyline points="1016.38,549.02 1065.14,549.02" fill="none" stroke="#861652" stroke-width="1.2" />
<polyline points="1016.38,555.11 1065.14,555.11" fill="none" stroke="#861652" stroke-width="1.2" />
<text transform="translate(1027.80,547.22) scale(0.88,1)" font-size="6.1" fill="#ee1414" text-anchor="start" >SDWNAMP#</text>
<text transform="translate(1027.80,553.31) scale(0.88,1)" font-size="6.1" fill="#ee1414" text-anchor="start" >OSC_EN</text>
<path d="M1065.14 640.45 V542.92 H1156.57 V640.45 Z" fill="none" stroke="#2f9a2f" stroke-width="1.35"/>
<text transform="translate(1065.74,539.32) scale(0.88,1)" font-size="6.1" fill="#3a2aa0" text-anchor="start" >Audio</text>
<text transform="translate(1065.74,648.05) scale(0.88,1)" font-size="6.1" fill="#3a2aa0" text-anchor="start" >Audio</text>
<polygon points="1064.54,545.72 1068.64,545.72 1071.74,549.02 1068.64,552.32 1064.54,552.32" fill="#0c7a3c"/>
<text transform="translate(1074.34,551.52) scale(0.88,1)" font-size="6.1" fill="#2a4a90" text-anchor="start" >SDWNAMP#</text>
<polygon points="1064.54,551.81 1068.64,551.81 1071.74,555.11 1068.64,558.41 1064.54,558.41" fill="#0c7a3c"/>
<text transform="translate(1074.34,557.61) scale(0.88,1)" font-size="6.1" fill="#2a4a90" text-anchor="start" >OSC_EN</text>
<polygon points="1064.54,585.59 1068.14,582.29 1071.74,585.59 1068.14,588.89" fill="#0c7a3c"/>
<text transform="translate(1074.34,588.09) scale(0.88,1)" font-size="6.1" fill="#2a4a90" text-anchor="start" >SCL</text>
<polygon points="1064.54,591.68 1068.14,588.38 1071.74,591.68 1068.14,594.98" fill="#0c7a3c"/>
<text transform="translate(1074.34,594.18) scale(0.88,1)" font-size="6.1" fill="#2a4a90" text-anchor="start" >SDA</text>
<polygon points="1064.54,606.67 1068.64,606.67 1071.74,609.97 1068.64,613.27 1064.54,613.27" fill="#0c7a3c"/>
<text transform="translate(1074.34,612.47) scale(0.88,1)" font-size="6.1" fill="#2a4a90" text-anchor="start" >SSI1_FS</text>
<polygon points="1064.54,612.76 1068.64,612.76 1071.74,616.06 1068.64,619.36 1064.54,619.36" fill="#0c7a3c"/>
<text transform="translate(1074.34,618.56) scale(0.88,1)" font-size="6.1" fill="#2a4a90" text-anchor="start" >SSI1_CLK</text>
<polygon points="1064.54,622.16 1067.64,618.86 1071.74,618.86 1071.74,625.46 1067.64,625.46" fill="#0c7a3c"/>
<text transform="translate(1074.34,624.66) scale(0.88,1)" font-size="6.1" fill="#2a4a90" text-anchor="start" >SSI1_RXD</text>
<polygon points="1064.54,624.96 1068.64,624.96 1071.74,628.26 1068.64,631.56 1064.54,631.56" fill="#0c7a3c"/>
<text transform="translate(1074.34,630.76) scale(0.88,1)" font-size="6.1" fill="#2a4a90" text-anchor="start" >SSI1_TXD</text>
<polyline points="845.71,609.97 1065.14,609.97" fill="none" stroke="#861652" stroke-width="1.2" />
<text transform="translate(974.00,608.07) scale(0.88,1)" font-size="6.1" fill="#ee1414" text-anchor="start" >SSI1_FS</text>
<polyline points="845.71,616.06 1065.14,616.06" fill="none" stroke="#861652" stroke-width="1.2" />
<text transform="translate(974.00,614.16) scale(0.88,1)" font-size="6.1" fill="#ee1414" text-anchor="start" >SSI1_CLK</text>
<polyline points="845.71,622.16 1065.14,622.16" fill="none" stroke="#861652" stroke-width="1.2" />
<text transform="translate(974.00,620.26) scale(0.88,1)" font-size="6.1" fill="#ee1414" text-anchor="start" >SSI1_RXD</text>
<polyline points="845.71,628.26 1065.14,628.26" fill="none" stroke="#861652" stroke-width="1.2" />
<text transform="translate(974.00,626.36) scale(0.88,1)" font-size="6.1" fill="#ee1414" text-anchor="start" >SSI1_TXD</text>
<path d="M924.95 683.11 V646.54 H992.0 V683.11 Z" fill="none" stroke="#2f9a2f" stroke-width="1.35"/>
<text transform="translate(925.75,643.14) scale(0.88,1)" font-size="6.1" fill="#3a2aa0" text-anchor="start" >RS232</text>
<text transform="translate(925.75,690.71) scale(0.88,1)" font-size="6.1" fill="#3a2aa0" text-anchor="start" >RS232</text>
<polygon points="924.35,649.34 928.45,649.34 931.55,652.64 928.45,655.94 924.35,655.94" fill="#0c7a3c"/>
<text transform="translate(934.15,655.14) scale(0.88,1)" font-size="6.1" fill="#2a4a90" text-anchor="start" >UART1_TXD</text>
<polyline points="845.71,652.64 924.95,652.64" fill="none" stroke="#861652" stroke-width="1.2" />
<text transform="translate(870.00,650.74) scale(0.88,1)" font-size="6.1" fill="#ee1414" text-anchor="start" >UART1_TXD</text>
<polygon points="924.35,658.73 927.45,655.43 931.55,655.43 931.55,662.03 927.45,662.03" fill="#0c7a3c"/>
<text transform="translate(934.15,661.23) scale(0.88,1)" font-size="6.1" fill="#2a4a90" text-anchor="start" >UART1_RXD</text>
<polyline points="845.71,658.73 924.95,658.73" fill="none" stroke="#861652" stroke-width="1.2" />
<text transform="translate(870.00,656.83) scale(0.88,1)" font-size="6.1" fill="#ee1414" text-anchor="start" >UART1_RXD</text>
<polygon points="924.35,661.53 928.45,661.53 931.55,664.83 928.45,668.13 924.35,668.13" fill="#0c7a3c"/>
<text transform="translate(934.15,667.33) scale(0.88,1)" font-size="6.1" fill="#2a4a90" text-anchor="start" >UART1_RTS</text>
<polyline points="845.71,664.83 924.95,664.83" fill="none" stroke="#861652" stroke-width="1.2" />
<text transform="translate(870.00,662.93) scale(0.88,1)" font-size="6.1" fill="#ee1414" text-anchor="start" >UART1_RTS</text>
<polygon points="924.35,670.92 927.45,667.62 931.55,667.62 931.55,674.22 927.45,674.22" fill="#0c7a3c"/>
<text transform="translate(934.15,673.42) scale(0.88,1)" font-size="6.1" fill="#2a4a90" text-anchor="start" >UART1_CTS</text>
<polyline points="845.71,670.92 924.95,670.92" fill="none" stroke="#861652" stroke-width="1.2" />
<text transform="translate(870.00,669.02) scale(0.88,1)" font-size="6.1" fill="#ee1414" text-anchor="start" >UART1_CTS</text>
<path d="M924.95 770 V713.59 H992.0 V770" fill="none" stroke="#2f9a2f" stroke-width="1.35"/>
<text transform="translate(925.75,710.19) scale(0.88,1)" font-size="6.1" fill="#3a2aa0" text-anchor="start" >SDCARD</text>
<polygon points="924.35,725.78 927.45,722.48 931.55,722.48 931.55,729.08 927.45,729.08" fill="#0c7a3c"/>
<text transform="translate(934.15,728.28) scale(0.88,1)" font-size="6.1" fill="#2a4a90" text-anchor="start" >SD1_CD</text>
<polyline points="845.71,725.78 924.95,725.78" fill="none" stroke="#861652" stroke-width="1.2" />
<text transform="translate(876.20,723.88) scale(0.88,1)" font-size="6.1" fill="#ee1414" text-anchor="start" >SD1_CD</text>
<polygon points="924.35,731.87 927.95,728.57 931.55,731.87 927.95,735.17" fill="#0c7a3c"/>
<text transform="translate(934.15,734.37) scale(0.88,1)" font-size="6.1" fill="#2a4a90" text-anchor="start" >SD1_D0</text>
<polyline points="845.71,731.87 924.95,731.87" fill="none" stroke="#861652" stroke-width="1.2" />
<text transform="translate(876.20,729.97) scale(0.88,1)" font-size="6.1" fill="#ee1414" text-anchor="start" >SD1_D0</text>
<polygon points="924.35,737.97 927.95,734.67 931.55,737.97 927.95,741.27" fill="#0c7a3c"/>
<text transform="translate(934.15,740.47) scale(0.88,1)" font-size="6.1" fill="#2a4a90" text-anchor="start" >SD1_D1</text>
<polyline points="845.71,737.97 924.95,737.97" fill="none" stroke="#861652" stroke-width="1.2" />
<text transform="translate(876.20,736.07) scale(0.88,1)" font-size="6.1" fill="#ee1414" text-anchor="start" >SD1_D1</text>
<polygon points="924.35,744.06 927.95,740.76 931.55,744.06 927.95,747.36" fill="#0c7a3c"/>
<text transform="translate(934.15,746.56) scale(0.88,1)" font-size="6.1" fill="#2a4a90" text-anchor="start" >SD1_D2</text>
<polyline points="845.71,744.06 924.95,744.06" fill="none" stroke="#861652" stroke-width="1.2" />
<text transform="translate(876.20,742.16) scale(0.88,1)" font-size="6.1" fill="#ee1414" text-anchor="start" >SD1_D2</text>
<polygon points="924.35,750.16 927.95,746.86 931.55,750.16 927.95,753.46" fill="#0c7a3c"/>
<text transform="translate(934.15,752.66) scale(0.88,1)" font-size="6.1" fill="#2a4a90" text-anchor="start" >SD1_D3</text>
<polyline points="845.71,750.16 924.95,750.16" fill="none" stroke="#861652" stroke-width="1.2" />
<text transform="translate(876.20,748.26) scale(0.88,1)" font-size="6.1" fill="#ee1414" text-anchor="start" >SD1_D3</text>
<polygon points="924.35,756.25 927.95,752.95 931.55,756.25 927.95,759.55" fill="#0c7a3c"/>
<text transform="translate(934.15,758.75) scale(0.88,1)" font-size="6.1" fill="#2a4a90" text-anchor="start" >SD1_CMD</text>
<polyline points="845.71,756.25 924.95,756.25" fill="none" stroke="#861652" stroke-width="1.2" />
<text transform="translate(876.20,754.35) scale(0.88,1)" font-size="6.1" fill="#ee1414" text-anchor="start" >SD1_CMD</text>
<path d="M626.28 770 V725.78 H699.43 V770" fill="none" stroke="#2f9a2f" stroke-width="1.3"/>
<text transform="translate(626.28,722.18) scale(0.88,1)" font-size="6.1" fill="#3a2aa0" text-anchor="start" >RESET</text>
<path d="M754.28 770 V311.3 H845.71 V770" fill="none" stroke="#2f9a2f" stroke-width="1.35"/>
<text transform="translate(754.28,307.90) scale(0.88,1)" font-size="6.1" fill="#3a2aa0" text-anchor="start" >CPU</text>
<polygon points="753.68,323.50 756.78,320.20 760.88,320.20 760.88,326.80 756.78,326.80" fill="#0c7a3c"/>
<text transform="translate(763.48,326.00) scale(0.88,1)" font-size="6.1" fill="#2a4a90" text-anchor="start" >ETN_TXP</text>
<polygon points="753.68,332.39 760.88,332.39 760.88,338.99 753.68,338.99" fill="#0c7a3c"/>
<text transform="translate(763.48,338.19) scale(0.88,1)" font-size="6.1" fill="#2a4a90" text-anchor="start" >ETN_3V3</text>
<polygon points="753.68,347.88 756.78,344.58 760.88,344.58 760.88,351.18 756.78,351.18" fill="#0c7a3c"/>
<text transform="translate(763.48,350.38) scale(0.88,1)" font-size="6.1" fill="#2a4a90" text-anchor="start" >ETN_TXN</text>
<polygon points="753.68,350.67 757.78,350.67 760.88,353.97 757.78,357.27 753.68,357.27" fill="#0c7a3c"/>
<text transform="translate(763.48,356.47) scale(0.88,1)" font-size="6.1" fill="#2a4a90" text-anchor="start" >ETN_RXP</text>
<polygon points="753.68,375.05 757.78,375.05 760.88,378.35 757.78,381.65 753.68,381.65" fill="#0c7a3c"/>
<text transform="translate(763.48,380.85) scale(0.88,1)" font-size="6.1" fill="#2a4a90" text-anchor="start" >ETN_RXN</text>
<polygon points="753.68,427.11 756.78,423.81 760.88,423.81 760.88,430.41 756.78,430.41" fill="#0c7a3c"/>
<text transform="translate(763.48,429.61) scale(0.88,1)" font-size="6.1" fill="#2a4a90" text-anchor="start" >ETN_ACTLED</text>
<polygon points="753.68,439.30 756.78,436.00 760.88,436.00 760.88,442.60 756.78,442.60" fill="#0c7a3c"/>
<text transform="translate(763.48,441.80) scale(0.88,1)" font-size="6.1" fill="#2a4a90" text-anchor="start" >ETN_LINKLED</text>
<polygon points="753.68,512.45 756.78,509.15 760.88,509.15 760.88,515.75 756.78,515.75" fill="#0c7a3c"/>
<text transform="translate(763.48,514.95) scale(0.88,1)" font-size="6.1" fill="#2a4a90" text-anchor="start" >USBH_VBUSEN</text>
<polygon points="753.68,515.24 757.78,515.24 760.88,518.54 757.78,521.84 753.68,521.84" fill="#0c7a3c"/>
<text transform="translate(763.48,521.04) scale(0.88,1)" font-size="6.1" fill="#2a4a90" text-anchor="start" >USBH_OC#</text>
<polygon points="753.68,524.64 757.28,521.34 760.88,524.64 757.28,527.94" fill="#0c7a3c"/>
<text transform="translate(763.48,527.14) scale(0.88,1)" font-size="6.1" fill="#2a4a90" text-anchor="start" >USBH_DM</text>
<polygon points="753.68,530.73 757.28,527.43 760.88,530.73 757.28,534.03" fill="#0c7a3c"/>
<text transform="translate(763.48,533.23) scale(0.88,1)" font-size="6.1" fill="#2a4a90" text-anchor="start" >USBH_DP</text>
<polygon points="753.68,533.53 760.88,533.53 760.88,540.13 753.68,540.13" fill="#0c7a3c"/>
<text transform="translate(763.48,539.33) scale(0.88,1)" font-size="6.1" fill="#2a4a90" text-anchor="start" >USBH_VBUS</text>
<polygon points="753.68,567.30 757.28,564.00 760.88,567.30 757.28,570.60" fill="#0c7a3c"/>
<text transform="translate(763.48,569.80) scale(0.88,1)" font-size="6.1" fill="#2a4a90" text-anchor="start" >USBOTG_DM</text>
<polygon points="753.68,573.40 757.28,570.10 760.88,573.40 757.28,576.70" fill="#0c7a3c"/>
<text transform="translate(763.48,575.90) scale(0.88,1)" font-size="6.1" fill="#2a4a90" text-anchor="start" >USBOTG_DP</text>
<polygon points="753.68,576.19 760.88,576.19 760.88,582.79 753.68,582.79" fill="#0c7a3c"/>
<text transform="translate(763.48,581.99) scale(0.88,1)" font-size="6.1" fill="#2a4a90" text-anchor="start" >USBOTG_ID</text>
<polygon points="753.68,582.29 760.88,582.29 760.88,588.89 753.68,588.89" fill="#0c7a3c"/>
<text transform="translate(763.48,588.09) scale(0.88,1)" font-size="6.1" fill="#2a4a90" text-anchor="start" >USBOTG_VBUS</text>
<polygon points="846.31,341.78 843.21,338.48 839.11,338.48 839.11,345.08 843.21,345.08" fill="#0c7a3c"/>
<text transform="translate(837.51,344.28) scale(0.88,1)" font-size="6.1" fill="#2a4a90" text-anchor="end" >LCD[0:23]</text>
<polygon points="846.31,347.88 843.21,344.58 839.11,344.58 839.11,351.18 843.21,351.18" fill="#0c7a3c"/>
<text transform="translate(837.51,350.38) scale(0.88,1)" font-size="6.1" fill="#2a4a90" text-anchor="end" >LSCLK</text>
<polygon points="846.31,353.97 843.21,350.67 839.11,350.67 839.11,357.27 843.21,357.27" fill="#0c7a3c"/>
<text transform="translate(837.51,356.47) scale(0.88,1)" font-size="6.1" fill="#2a4a90" text-anchor="end" >OE_ACD</text>
<polygon points="846.31,360.07 843.21,356.77 839.11,356.77 839.11,363.37 843.21,363.37" fill="#0c7a3c"/>
<text transform="translate(837.51,362.57) scale(0.88,1)" font-size="6.1" fill="#2a4a90" text-anchor="end" >HSYNC</text>
<polygon points="846.31,366.16 843.21,362.86 839.11,362.86 839.11,369.46 843.21,369.46" fill="#0c7a3c"/>
<text transform="translate(837.51,368.66) scale(0.88,1)" font-size="6.1" fill="#2a4a90" text-anchor="end" >VSYNC</text>
<polygon points="846.31,368.96 842.21,368.96 839.11,372.26 842.21,375.56 846.31,375.56" fill="#0c7a3c"/>
<text transform="translate(837.51,374.76) scale(0.88,1)" font-size="6.1" fill="#2a4a90" text-anchor="end" >PENIRQ#</text>
<polygon points="846.31,378.35 843.21,375.05 839.11,375.05 839.11,381.65 843.21,381.65" fill="#0c7a3c"/>
<text transform="translate(837.51,380.85) scale(0.88,1)" font-size="6.1" fill="#2a4a90" text-anchor="end" >PWM</text>
<polygon points="846.31,423.81 842.21,423.81 839.11,427.11 842.21,430.41 846.31,430.41" fill="#0c7a3c"/>
<text transform="translate(837.51,429.61) scale(0.88,1)" font-size="6.1" fill="#2a4a90" text-anchor="end" >DispOn/Off</text>
<polygon points="846.31,506.35 842.71,503.05 839.11,506.35 842.71,509.65" fill="#0c7a3c"/>
<text transform="translate(837.51,508.85) scale(0.88,1)" font-size="6.1" fill="#2a4a90" text-anchor="end" >SCL</text>
<polygon points="846.31,518.54 842.71,515.24 839.11,518.54 842.71,521.84" fill="#0c7a3c"/>
<text transform="translate(837.51,521.04) scale(0.88,1)" font-size="6.1" fill="#2a4a90" text-anchor="end" >SDA</text>
<polygon points="846.31,609.97 843.21,606.67 839.11,606.67 839.11,613.27 843.21,613.27" fill="#0c7a3c"/>
<text transform="translate(837.51,612.47) scale(0.88,1)" font-size="6.1" fill="#2a4a90" text-anchor="end" >SSI1_FS</text>
<polygon points="846.31,616.06 843.21,612.76 839.11,612.76 839.11,619.36 843.21,619.36" fill="#0c7a3c"/>
<text transform="translate(837.51,618.56) scale(0.88,1)" font-size="6.1" fill="#2a4a90" text-anchor="end" >SSI1_CLK</text>
<polygon points="846.31,618.86 842.21,618.86 839.11,622.16 842.21,625.46 846.31,625.46" fill="#0c7a3c"/>
<text transform="translate(837.51,624.66) scale(0.88,1)" font-size="6.1" fill="#2a4a90" text-anchor="end" >SSI1_RXD</text>
<polygon points="846.31,628.26 843.21,624.96 839.11,624.96 839.11,631.56 843.21,631.56" fill="#0c7a3c"/>
<text transform="translate(837.51,630.76) scale(0.88,1)" font-size="6.1" fill="#2a4a90" text-anchor="end" >SSI1_TXD</text>
<polygon points="846.31,652.64 843.21,649.34 839.11,649.34 839.11,655.94 843.21,655.94" fill="#0c7a3c"/>
<text transform="translate(837.51,655.14) scale(0.88,1)" font-size="6.1" fill="#2a4a90" text-anchor="end" >UART1_TXD</text>
<polygon points="846.31,655.43 842.21,655.43 839.11,658.73 842.21,662.03 846.31,662.03" fill="#0c7a3c"/>
<text transform="translate(837.51,661.23) scale(0.88,1)" font-size="6.1" fill="#2a4a90" text-anchor="end" >UART1_RXD</text>
<polygon points="846.31,664.83 843.21,661.53 839.11,661.53 839.11,668.13 843.21,668.13" fill="#0c7a3c"/>
<text transform="translate(837.51,667.33) scale(0.88,1)" font-size="6.1" fill="#2a4a90" text-anchor="end" >UART1_RTS</text>
<polygon points="846.31,667.62 842.21,667.62 839.11,670.92 842.21,674.22 846.31,674.22" fill="#0c7a3c"/>
<text transform="translate(837.51,673.42) scale(0.88,1)" font-size="6.1" fill="#2a4a90" text-anchor="end" >UART1_CTS</text>
<polygon points="846.31,722.48 842.21,722.48 839.11,725.78 842.21,729.08 846.31,729.08" fill="#0c7a3c"/>
<text transform="translate(837.51,728.28) scale(0.88,1)" font-size="6.1" fill="#2a4a90" text-anchor="end" >SD1_CD</text>
<polygon points="846.31,731.87 842.71,728.57 839.11,731.87 842.71,735.17" fill="#0c7a3c"/>
<text transform="translate(837.51,734.37) scale(0.88,1)" font-size="6.1" fill="#2a4a90" text-anchor="end" >SD1_D0</text>
<polygon points="846.31,737.97 842.71,734.67 839.11,737.97 842.71,741.27" fill="#0c7a3c"/>
<text transform="translate(837.51,740.47) scale(0.88,1)" font-size="6.1" fill="#2a4a90" text-anchor="end" >SD1_D1</text>
<polygon points="846.31,744.06 842.71,740.76 839.11,744.06 842.71,747.36" fill="#0c7a3c"/>
<text transform="translate(837.51,746.56) scale(0.88,1)" font-size="6.1" fill="#2a4a90" text-anchor="end" >SD1_D2</text>
<polygon points="846.31,750.16 842.71,746.86 839.11,750.16 842.71,753.46" fill="#0c7a3c"/>
<text transform="translate(837.51,752.66) scale(0.88,1)" font-size="6.1" fill="#2a4a90" text-anchor="end" >SD1_D3</text>
<polygon points="846.31,756.25 842.71,752.95 839.11,756.25 842.71,759.55" fill="#0c7a3c"/>
<text transform="translate(837.51,758.75) scale(0.88,1)" font-size="6.1" fill="#2a4a90" text-anchor="end" >SD1_CMD</text>
<path d="M1119.99 681.6 V702.6" stroke="#ff1a1a" stroke-width="1.1"/>
<circle cx="1119.99" cy="680" r="1.5" fill="#fff" stroke="#ff1a1a" stroke-width=".9"/>
<text transform="translate(1114.59,676.80) scale(0.88,1)" font-size="5.6" fill="#2a2a2a" text-anchor="start" >+5V</text>
<text transform="translate(1115.59,698.00) scale(0.88,1)" font-size="3.2" fill="#555" text-anchor="start" >1</text>
<rect x="1113.59" y="702.6" width="12.8" height="6.2" fill="#fff" stroke="#1a1aff" stroke-width="1.1"/>
<text transform="translate(1114.59,716.80) scale(0.88,1)" font-size="6.1" fill="#3a2aa0" text-anchor="start" >TP2</text>
<text transform="translate(1114.59,725.60) scale(0.88,1)" font-size="6.1" fill="#3a2aa0" text-anchor="start" >TEST POINT</text>
<path d="M1156.57 681.6 V702.6" stroke="#ff1a1a" stroke-width="1.1"/>
<circle cx="1156.57" cy="680" r="1.5" fill="#fff" stroke="#ff1a1a" stroke-width=".9"/>
<text transform="translate(1151.17,676.80) scale(0.88,1)" font-size="5.6" fill="#2a2a2a" text-anchor="start" >+3.3V</text>
<text transform="translate(1152.17,698.00) scale(0.88,1)" font-size="3.2" fill="#555" text-anchor="start" >1</text>
<rect x="1150.17" y="702.6" width="12.8" height="6.2" fill="#fff" stroke="#1a1aff" stroke-width="1.1"/>
<text transform="translate(1151.17,716.80) scale(0.88,1)" font-size="6.1" fill="#3a2aa0" text-anchor="start" >TP3</text>
<text transform="translate(1151.17,725.60) scale(0.88,1)" font-size="6.1" fill="#3a2aa0" text-anchor="start" >TEST POINT</text>
<path d="M1189.94 678.4 h6.4 M1193.14 678.4 V702" stroke="#ff1a1a" stroke-width="1.1"/>
<text transform="translate(1186.74,676.80) scale(1,1)" font-size="5.6" fill="#2a2a2a" text-anchor="start" >VDDIO</text>
<text transform="translate(1188.74,698.00) scale(0.88,1)" font-size="3.2" fill="#555" text-anchor="start" >1</text>
<rect x="1186.74" y="702.6" width="12.8" height="6.2" fill="#fff" stroke="#1a1aff" stroke-width="1.1"/>
<text transform="translate(1187.74,716.80) scale(0.88,1)" font-size="6.1" fill="#3a2aa0" text-anchor="start" >TP4</text>
<text transform="translate(1187.74,725.60) scale(0.88,1)" font-size="6.1" fill="#3a2aa0" text-anchor="start" >TEST POINT</text>
<text transform="translate(1114.59,739.60) scale(0.88,1)" font-size="6.1" fill="#3a2aa0" text-anchor="start" >TP5</text>
<text transform="translate(1114.59,749.80) scale(0.88,1)" font-size="6.1" fill="#3a2aa0" text-anchor="start" >TEST POINT</text>
<rect x="1113.59" y="751.4" width="12.8" height="6.2" fill="#fff" stroke="#1a1aff" stroke-width="1.1"/>
<text transform="translate(1151.17,739.60) scale(0.88,1)" font-size="6.1" fill="#3a2aa0" text-anchor="start" >TP6</text>
<text transform="translate(1151.17,749.80) scale(0.88,1)" font-size="6.1" fill="#3a2aa0" text-anchor="start" >TEST POINT</text>
<rect x="1150.17" y="751.4" width="12.8" height="6.2" fill="#fff" stroke="#1a1aff" stroke-width="1.1"/>
<text transform="translate(1187.74,739.60) scale(0.88,1)" font-size="6.1" fill="#3a2aa0" text-anchor="start" >TP7</text>
<text transform="translate(1187.74,749.80) scale(0.88,1)" font-size="6.1" fill="#3a2aa0" text-anchor="start" >TEST POINT</text>
<rect x="1186.74" y="751.4" width="12.8" height="6.2" fill="#fff" stroke="#1a1aff" stroke-width="1.1"/>
<text transform="translate(1224.31,739.60) scale(0.88,1)" font-size="6.1" fill="#3a2aa0" text-anchor="start" >TP8</text>
<text transform="translate(1224.31,749.80) scale(0.88,1)" font-size="6.1" fill="#3a2aa0" text-anchor="start" >TEST POINT</text>
<rect x="1223.31" y="751.4" width="12.8" height="6.2" fill="#fff" stroke="#1a1aff" stroke-width="1.1"/>
</svg>
</div>
<svg width="1349" height="808" viewBox="0 0 1349 808">
<defs>
<linearGradient id="gRed" x1="0" y1="0" x2="0" y2="1"><stop offset="0" stop-color="#f0506a"/><stop offset=".45" stop-color="#d8102c"/><stop offset="1" stop-color="#e00028"/></linearGradient>
<linearGradient id="gBar" x1="0" y1="0" x2="1" y2="0"><stop offset="0" stop-color="#f4f4f4"/><stop offset="1" stop-color="#a8a8a8"/></linearGradient>
<linearGradient id="gAB" x1="0" y1="0" x2="0" y2="1"><stop offset="0" stop-color="#2a68b0"/><stop offset="1" stop-color="#1cc4f4"/></linearGradient>
<linearGradient id="gGreen" x1="0" y1="0" x2="0" y2="1"><stop offset="0" stop-color="#94c23a"/><stop offset="1" stop-color="#6aa014"/></linearGradient>
<radialGradient id="gLens" cx=".4" cy=".3" r=".8"><stop offset="0" stop-color="#cfe2fa"/><stop offset=".5" stop-color="#7aa6ea"/><stop offset="1" stop-color="#4a7ad8"/></radialGradient>
<linearGradient id="gLens2" x1="0" y1="0" x2="0" y2="1"><stop offset="0" stop-color="#5a88e0"/><stop offset="1" stop-color="#b0d4f4"/></linearGradient>
<linearGradient id="gPage" x1="0" y1="0" x2="1" y2="1"><stop offset="0" stop-color="#fbfcfd"/><stop offset="1" stop-color="#e6ecef"/></linearGradient>
<linearGradient id="gFold" x1="0" y1="0" x2="1" y2="1"><stop offset="0" stop-color="#fdf0c6"/><stop offset="1" stop-color="#f9df98"/></linearGradient>
<radialGradient id="gGlobe" cx=".35" cy=".3" r=".8"><stop offset="0" stop-color="#9fdcf6"/><stop offset=".6" stop-color="#2f8fd6"/><stop offset="1" stop-color="#1a5fa8"/></radialGradient>
<linearGradient id="gFold2" x1="0" y1="0" x2="0" y2="1"><stop offset="0" stop-color="#fbe070"/><stop offset="1" stop-color="#eab414"/></linearGradient>
<linearGradient id="gHandle" x1="0" y1="0" x2="1" y2="1"><stop offset="0" stop-color="#f6e0b0"/><stop offset=".6" stop-color="#eea030"/><stop offset="1" stop-color="#c87010"/></linearGradient>
</defs>
<rect x="7" y="7" width="39" height="38" fill="#1e6ab6"/>
<g fill="none" stroke="#fff" stroke-width="1.1"><rect x="14.6" y="12.6" width="10" height="6.8"/><path d="M18 19.4v2.6h3.2v-2.6"/><rect x="12.4" y="22.8" width="27" height="2.6"/><rect x="12.4" y="25.4" width="3.4" height="14"/><rect x="28.6" y="26.8" width="10.8" height="6.2"/><rect x="28.6" y="33" width="10.8" height="6.4"/><path d="M32.4 29.6h3.4M32.4 36.2h3.4"/></g>
<text x="49.4" y="34.9" font-size="24.5" fill="#f4f4f4" textLength="91" lengthAdjust="spacingAndGlyphs" style="font-weight:400" stroke="#1a303e" stroke-width=".6">Factory</text>

<text x="143.4" y="34.9" font-size="24.5" fill="#f6f6f6" textLength="65.2" lengthAdjust="spacingAndGlyphs" font-weight="bold" stroke="#1a303e" stroke-width=".8">Logix</text>

<text x="210.6" y="20.2" font-size="3.2" fill="#6f8494" textLength="4.6" lengthAdjust="spacingAndGlyphs">TM</text>

<g fill="#fff"><path d="M230.2 24.2 L245.2 15.2 L259.8 24.2 L258.6 26.6 L245.2 18.4 L231.6 26.6 Z"/><path d="M234.2 26.4 L245.2 19.8 L256.1 26.4 V37.7 H248.4 V29.6 a3.1 3.1 0 0 0 -6.2 0 V37.7 H234.2 Z"/><rect x="251.6" y="14.1" width="4.5" height="6.4"/></g>
<g fill="#fff"><rect x="278.4" y="12.3" width="6.3" height="4.9"/><rect x="286.7" y="12.3" width="6.3" height="4.9"/><rect x="295.0" y="12.3" width="6.3" height="4.9"/><rect x="278.4" y="19.0" width="6.3" height="4.9"/><rect x="286.7" y="19.0" width="6.3" height="4.9"/><rect x="295.0" y="19.0" width="6.3" height="4.9"/><rect x="278.4" y="25.9" width="6.3" height="4.9"/><rect x="286.7" y="25.9" width="6.3" height="4.9"/><rect x="295.0" y="25.9" width="6.3" height="4.9"/><rect x="278.4" y="32.3" width="6.3" height="4.9"/><rect x="286.7" y="32.3" width="6.3" height="4.9"/><rect x="295.0" y="32.3" width="6.3" height="4.9"/></g><path d="M288.6 37.2 L291 30.6 L303.4 18.2 L307.4 22.2 L295 34.6 Z" fill="#1a303e" stroke="#1a303e" stroke-width="2.4"/><path d="M288.8 37 L290.8 31.4 L294.4 35 Z M291.8 30.2 L302 20 L305.6 23.6 L295.4 33.8 Z M303 19 L304.4 17.6 L308 21.2 L306.6 22.6 Z" fill="#fff"/>
<rect x="320" y="1" width="44" height="49" fill="#f8f8fa"/>
<g fill="#1a303e"><path d="M333 13.4 a9.3 2.4 0 0 1 18.6 0 V24 a9.3 2.4 0 0 1 -18.6 0 Z"/><path d="M333 26.8 a9.3 2.4 0 0 0 18.6 0 V31 a9.3 2.4 0 0 1 -18.6 0 Z"/><path d="M333 33.8 a9.3 2.4 0 0 0 18.6 0 V37 a9.3 2.4 0 0 1 -18.6 0 Z"/></g><path d="M328.2 13.2 C333 12.8 337.8 14.8 340.4 18.6 L342.8 13.4 L346 27.2 L333.4 23 L337.4 21.6 C335.6 18.8 332.4 17.4 329.6 17.6 Z" fill="#1a303e" stroke="#f8f8fa" stroke-width="1.3" stroke-linejoin="round"/>
<circle cx="391.1" cy="25.1" r="13.8" fill="none" stroke="#fff" stroke-width="1.8"/><path d="M391.1 11.3 A13.8 13.8 0 0 0 391.1 38.9 Z" fill="#fff"/><path d="M379.9 25 L387.6 18.9 V22.7 H391.1 V27.3 H387.6 V31.1 Z" fill="#1a303e"/><path d="M402.3 25 L394.6 18.9 V22.7 H391.1 V27.3 H394.6 V31.1 Z" fill="#fff"/>
<g><rect x="430.7" y="11.6" width="21.4" height="19" rx="1.6" fill="none" stroke="#fff" stroke-width="2"/><rect x="430.7" y="11.6" width="21.4" height="3.8" fill="#fff"/><rect x="425.5" y="19" width="22" height="19.4" rx="1.6" fill="#1a303e" stroke="#fff" stroke-width="2"/><rect x="425.5" y="19" width="22" height="4.2" fill="#fff"/><g fill="#1a303e"><rect x="443.4" y="12.6" width="1.7" height="1.6"/><rect x="446" y="12.6" width="1.7" height="1.6"/><rect x="448.6" y="12.6" width="1.7" height="1.6"/><rect x="438.6" y="20.2" width="1.7" height="1.6"/><rect x="441.2" y="20.2" width="1.7" height="1.6"/><rect x="443.8" y="20.2" width="1.7" height="1.6"/></g><g fill="#fff"><rect x="428.4" y="25" width="8" height="1.7"/><rect x="428.4" y="28" width="8" height="1.7"/><rect x="428.4" y="31" width="8" height="1.7"/><rect x="428.4" y="34" width="8" height="1.7"/><rect x="438.2" y="24.8" width="6.4" height="11"/></g></g>
<polygon points="485.23,14.61 485.49,10.41 489.11,10.41 489.37,14.61 491.62,15.34 494.29,12.10 497.22,14.22 494.96,17.77 496.36,19.69 500.42,18.63 501.54,22.07 497.63,23.62 497.63,25.98 501.54,27.53 500.42,30.97 496.36,29.91 494.96,31.83 497.22,35.38 494.29,37.50 491.62,34.26 489.37,34.99 489.11,39.19 485.49,39.19 485.23,34.99 482.98,34.26 480.31,37.50 477.38,35.38 479.64,31.83 478.24,29.91 474.18,30.97 473.06,27.53 476.97,25.98 476.97,23.62 473.06,22.07 474.18,18.63 478.24,19.69 479.64,17.77 477.38,14.22 480.31,12.10 482.98,15.34" fill="#fff"/><circle cx="487.3" cy="24.8" r="10.5" fill="#fff"/><circle cx="487.3" cy="24.8" r="5" fill="#1a303e"/>
<g fill="#fff"><ellipse cx="1236" cy="21" rx="6.6" ry="8.5"/><path d="M1224.6 39.4 C1224.6 33 1229 30.6 1233 29.4 L1236 31.6 L1239 29.4 C1243 30.6 1246 33 1246 39.4 Z"/></g><circle cx="1244.7" cy="33.6" r="7.7" fill="#1a303e"/><circle cx="1244.7" cy="33.6" r="6.8" fill="#fff"/><path d="M1241.7 30.6 L1247.5 36.4 M1247.5 30.6 L1241.7 36.4" stroke="#1a303e" stroke-width="2" fill="none"/>
<rect x="1272.8" y="33.7" width="7.2" height="2.2" fill="#e4e0dc"/><rect x="1293.4" y="30" width="8.2" height="5.6" fill="none" stroke="#e4e0dc" stroke-width="1"/><rect x="1292.9" y="29" width="9.2" height="2.2" fill="#e4e0dc"/><path d="M1315.2 29.4 L1321.8 36 M1321.8 29.4 L1315.2 36" stroke="#e4e0dc" stroke-width="1.1" fill="none"/>
<rect x="15" y="58" width="1319" height="1" fill="#dadada"/>
<path d="M32 66 L46.8 68.5 V93.6 L32 90 Z" fill="url(#gPage)" stroke="#cfdde6" stroke-width=".9"/><path d="M30 91 L46 95 L50 94 L34 90.4Z" fill="#e4e4e4" opacity=".6"/>
<path d="M74.3 66.2 L88.6 68.5 V93.6 L74.3 90.2 Z" fill="url(#gPage)" stroke="#cfdde6" stroke-width=".9"/><g fill="none" stroke="#d0d4d6" stroke-width="2.6"><ellipse cx="90.6" cy="79.2" rx="6.6" ry="4" transform="rotate(-42 90.6 79.2)"/><ellipse cx="79.6" cy="89.2" rx="6.6" ry="4" transform="rotate(-42 79.6 89.2)"/></g><path d="M82 87 L88 81.6" stroke="#c4c8ca" stroke-width="2.6"/>
<path d="M108 70.4 C112 69 118 68.6 122 68.8 L124 66.8 H131.6 L132.8 68.6 V91.6 L110.4 89.4 Z" fill="#fbe6aa"/><path d="M107.8 72.2 L127 74.4 C129.6 74.8 131 76.4 131.2 78.6 L132.2 93.2 L109.8 89.8 Z" fill="url(#gFold)" stroke="#f6dfa0" stroke-width=".5"/><rect x="110.6" y="74.4" width="8.4" height="3.6" rx=".8" fill="#fff" transform="rotate(6 110.6 74.4)"/>
<circle cx="161.6" cy="79.4" r="13.5" fill="#fff" stroke="#6c6c6c" stroke-width="1.7"/><circle cx="161.6" cy="79.4" r="11.9" fill="none" stroke="#c4c4c4" stroke-width=".8"/><circle cx="161.6" cy="79.4" r="10.9" fill="url(#gRed)" stroke="#9c0c20" stroke-width=".9"/><rect x="154.1" y="76.1" width="15" height="5.8" fill="#fff"/><rect x="155" y="77" width="13.2" height="4" fill="url(#gBar)"/>
<path d="M198.4 91.4 L214 95.6 L217.6 94.6 L202 90.4Z" fill="#6a6a6a" opacity=".8"/><path d="M201.3 66.2 L215.8 68.2 V93.6 L201.3 90 Z" fill="#dfecf3" stroke="#5e92b4" stroke-width="1"/><path d="M202 79 L215 80.6 V92.8 L202 89.6Z" fill="#cbdfea"/><path d="M204.2 86.8 L206 83 L223.8 66.2 C225.6 64.8 227.8 66.8 226.6 68.6 L208.8 85.8 Z" fill="#d8d8d8" stroke="#8a8a8a" stroke-width=".8"/><path d="M207.6 83.6 L224.6 67.4" stroke="#f4f4f4" stroke-width="1"/>
<text x="20.2" y="111.2" font-size="12" fill="#b3b3b3" stroke="#fff" stroke-width=".13" textLength="37.8" lengthAdjust="spacingAndGlyphs">Upload</text>

<text x="71.3" y="111.2" font-size="12" fill="#b3b3b3" stroke="#fff" stroke-width=".13" textLength="19.9" lengthAdjust="spacingAndGlyphs">Link</text>

<text x="110.9" y="111.2" font-size="12" fill="#b3b3b3" stroke="#fff" stroke-width=".13" textLength="20.1" lengthAdjust="spacingAndGlyphs">Add</text>

<text x="144.9" y="111.2" font-size="12" fill="#1e1e1e" stroke="#fff" stroke-width=".13" textLength="34" lengthAdjust="spacingAndGlyphs">Delete</text>

<text x="186" y="111.2" font-size="12" fill="#1e1e1e" stroke="#fff" stroke-width=".13" textLength="53.4" lengthAdjust="spacingAndGlyphs">Properties</text>

<text x="104.6" y="125" font-size="12" fill="#b3b3b3" stroke="#fff" stroke-width=".13" textLength="33.5" lengthAdjust="spacingAndGlyphs">Folder</text>

<path d="M36.2 120.2 h5.8 l-2.9 3.2z M78.2 120.2 h5.8 l-2.9 3.2z" fill="#a2a2a2"/>
<text x="114.7" y="143.7" font-size="12" fill="#1e1e1e" stroke="#fff" stroke-width=".13" textLength="31.5" lengthAdjust="spacingAndGlyphs">Basics</text>

<path d="M246.5 63v82 M500.5 63v82 M561.5 63v82" stroke="#d3d3d3" stroke-width="1"/>
<text x="251.5" y="77" font-size="12" fill="#1e1e1e" stroke="#fff" stroke-width=".13" textLength="35.3" lengthAdjust="spacingAndGlyphs">Search</text>

<rect x="294.5" y="61.5" width="199" height="21" fill="#fff" stroke="#ababab" stroke-width="1"/>
<text x="355.9" y="143.7" font-size="12" fill="#1e1e1e" stroke="#fff" stroke-width=".13" textLength="34.8" lengthAdjust="spacingAndGlyphs">Search</text>

<ellipse cx="535" cy="77.6" rx="5.6" ry="2" fill="none" stroke="#d8d8d8" stroke-width=".8"/><path d="M530.6 75.6 L525.4 85" stroke="#6a3c12" stroke-width="2.8" stroke-linecap="round"/><path d="M531 75 L529.8 77.2" stroke="#c8a040" stroke-width="2.2"/><path d="M525.6 84.6 L524.8 86" stroke="#b89020" stroke-width="3" stroke-linecap="round"/><ellipse cx="533.7" cy="70.2" rx="6.1" ry="5" fill="#cfe8f6" stroke="#7a8a94" stroke-width="1"/><ellipse cx="532.6" cy="69" rx="3.4" ry="2.4" fill="#eaf6fc"/>
<text x="514.4" y="94.6" font-size="16.4" font-weight="bold" fill="url(#gAB)" textLength="11.6" lengthAdjust="spacingAndGlyphs">A</text><text x="535.4" y="94.6" font-size="16.4" font-weight="bold" fill="url(#gAB)" textLength="10" lengthAdjust="spacingAndGlyphs">B</text><path d="M526.4 89 H530.4 V86.6 L535 90.8 L530.4 95 V92.6 H526.4Z" fill="#18e018" stroke="#10b010" stroke-width=".5"/>
<text x="507.9" y="111.2" font-size="12" fill="#1e1e1e" stroke="#fff" stroke-width=".13" textLength="45.4" lengthAdjust="spacingAndGlyphs">Find and</text>

<text x="510.4" y="125" font-size="12" fill="#1e1e1e" stroke="#fff" stroke-width=".13" textLength="40.1" lengthAdjust="spacingAndGlyphs">Replace</text>

<text x="504.6" y="143.7" font-size="12" fill="#1e1e1e" stroke="#fff" stroke-width=".13" textLength="52.4" lengthAdjust="spacingAndGlyphs">Advanced</text>

<path d="M23.2 163.7 H28.8 V158.5 Z M43.4 183.6 H49 V178.4 Z" fill="#3f3f3f"/>
<circle cx="45" cy="160.2" r="6.5" fill="url(#gGlobe)"/><path d="M40.6 156.4 c1.6 -1 3.4 -.8 4.4 .4 c.6 1.4 -1 2.2 -.4 3.6 c1 1.2 .6 3 -.8 4.4 c-1.6 -.4 -1.4 -2.6 -2.6 -3.4 c-1.4 -1 -1.6 -3.4 -.6 -5 Z M46.6 154.6 c1.8 .2 3.2 1.4 4 3 c-1.4 .8 -3 -.2 -3.4 -1.4 Z" fill="#6cc04a"/><path d="M48.5 159 h3.4 l1.3 1.3 v8 h-4.7 Z" fill="#eef0f2" stroke="#9aa2a8" stroke-width=".6"/><path d="M49.4 162h3 M49.4 163.6h3 M49.4 165.2h3 M49.4 166.8h3" stroke="#8a9298" stroke-width=".6"/>
<path d="M60.8 177.4 h3.6 l1 -1.6 h6.2 l.8 1.4 v7.8 h-11.6 Z" fill="#e8b010"/><path d="M61 178.6 l9.6 -1.4 c1.4 -.2 2 .6 2 1.8 v6.4 h-11.6 Z" fill="url(#gFold2)"/><rect x="62.4" y="179.6" width="3" height="1.4" fill="#fff"/>
<path d="M82 193.5 h8 l3.3 3.3 v11.8 h-11.3 Z" fill="#fff" stroke="#9a9a9a" stroke-width=".9"/><path d="M90 193.5 v3.3 h3.3" fill="none" stroke="#9a9a9a" stroke-width=".9"/><path d="M89.4 199.6h2.4 M89.4 201.8h2.4 M89.4 204h2.4 M89.4 206.2h2.4" stroke="#3aa060" stroke-width="1.1" stroke-dasharray="1.2 .8"/><rect x="78.6" y="197.6" width="9" height="9" fill="#fff" stroke="#1c7444" stroke-width="1.3"/><path d="M80.6 199.6 L85.8 204.8 M85.8 199.6 L80.6 204.8" stroke="#1c7444" stroke-width="1.7"/>
<path d="M82.4 213.6 h6 l3.2 3.2 v9 a1.8 1.8 0 0 1 -1.8 1.8 h-7.4 a1.8 1.8 0 0 1 -1.8 -1.8 v-10.4 a1.8 1.8 0 0 1 1.8 -1.8 Z" fill="#fff" stroke="#f01010" stroke-width="1.1"/><path d="M86 217.4 c.9 2.2 -1.6 5.4 -3 6.4 c1.6 -.9 4.2 -1.3 6.2 -.8 c-1.6 -.7 -3.6 -3.4 -3.2 -5.6 Z" fill="none" stroke="#f01010" stroke-width=".9"/><circle cx="86" cy="217.4" r=".9" fill="#fff" stroke="#f01010" stroke-width=".7"/><circle cx="83.1" cy="223.8" r=".9" fill="#fff" stroke="#f01010" stroke-width=".7"/><circle cx="89.1" cy="223" r=".9" fill="#fff" stroke="#f01010" stroke-width=".7"/>
<path d="M80.2 234.0 h7.6 l3.4 3.4 v11.1 h-11 Z" fill="#fff" stroke="#8a8a8a" stroke-width="1"/><path d="M87.8 234.0 v3.4 h3.4" fill="none" stroke="#8a8a8a" stroke-width="1"/>
<path d="M80.2 254.0 h7.6 l3.4 3.4 v11.1 h-11 Z" fill="#fff" stroke="#8a8a8a" stroke-width="1"/><path d="M87.8 254.0 v3.4 h3.4" fill="none" stroke="#8a8a8a" stroke-width="1"/>
<path d="M80.2 274.0 h7.6 l3.4 3.4 v11.1 h-11 Z" fill="#fff" stroke="#8a8a8a" stroke-width="1"/><path d="M87.8 274.0 v3.4 h3.4" fill="none" stroke="#8a8a8a" stroke-width="1"/>
<path d="M80.2 294.0 h7.6 l3.4 3.4 v11.1 h-11 Z" fill="#fff" stroke="#8a8a8a" stroke-width="1"/><path d="M87.8 294.0 v3.4 h3.4" fill="none" stroke="#8a8a8a" stroke-width="1"/><path d="M82.2 298.5h6.6 M82.2 300.5h6.6 M82.2 302.5h6.6 M82.2 304.5h6.6 M82.2 306.5h6.6" stroke="#8a8a8a" stroke-width=".8"/>
<path d="M80.2 314.0 h7.6 l3.4 3.4 v11.1 h-11 Z" fill="#fff" stroke="#8a8a8a" stroke-width="1"/><path d="M87.8 314.0 v3.4 h3.4" fill="none" stroke="#8a8a8a" stroke-width="1"/>
<path d="M82.4 333.6 h6 l3.2 3.2 v9 a1.8 1.8 0 0 1 -1.8 1.8 h-7.4 a1.8 1.8 0 0 1 -1.8 -1.8 v-10.4 a1.8 1.8 0 0 1 1.8 -1.8 Z" fill="#fff" stroke="#f01010" stroke-width="1.1"/><path d="M86 337.4 c.9 2.2 -1.6 5.4 -3 6.4 c1.6 -.9 4.2 -1.3 6.2 -.8 c-1.6 -.7 -3.6 -3.4 -3.2 -5.6 Z" fill="none" stroke="#f01010" stroke-width=".9"/><circle cx="86" cy="337.4" r=".9" fill="#fff" stroke="#f01010" stroke-width=".7"/><circle cx="83.1" cy="343.8" r=".9" fill="#fff" stroke="#f01010" stroke-width=".7"/><circle cx="89.1" cy="343" r=".9" fill="#fff" stroke="#f01010" stroke-width=".7"/>
<text x="60.2" y="166.3" font-size="13" fill="#1e1e1e" stroke="#fff" stroke-width=".13" textLength="97.6" lengthAdjust="spacingAndGlyphs">Global Documents</text>

<text x="80.2" y="186.3" font-size="13" fill="#1e1e1e" stroke="#fff" stroke-width=".13" textLength="95.9" lengthAdjust="spacingAndGlyphs">Console Assembly</text>

<text x="100" y="206.3" font-size="13" fill="#1e1e1e" stroke="#fff" stroke-width=".13" textLength="134.9" lengthAdjust="spacingAndGlyphs">AEGIS_CONSOLE BOM.xls</text>

<text x="100" y="226.3" font-size="13" fill="#1e1e1e" stroke="#b4d5ee" stroke-width=".13" textLength="154.6" lengthAdjust="spacingAndGlyphs">Aegis_Console Schematic.pdf</text>

<text x="100" y="246.3" font-size="13" fill="#1e1e1e" stroke="#fff" stroke-width=".13" textLength="141.6" lengthAdjust="spacingAndGlyphs">AEGIS_CONSOLE(mod).cad</text>

<text x="100" y="266.3" font-size="13" fill="#1e1e1e" stroke="#fff" stroke-width=".13" textLength="110.7" lengthAdjust="spacingAndGlyphs">AEGIS_CONSOLE.SPT</text>

<text x="100" y="286.3" font-size="13" fill="#1e1e1e" stroke="#fff" stroke-width=".13" textLength="110.2" lengthAdjust="spacingAndGlyphs">AEGIS_CONSOLE.SST</text>

<text x="100" y="306.3" font-size="13" fill="#1e1e1e" stroke="#fff" stroke-width=".13" textLength="111.5" lengthAdjust="spacingAndGlyphs">centroid (console).txt</text>

<text x="100" y="326.3" font-size="13" fill="#1e1e1e" stroke="#fff" stroke-width=".13" textLength="99.5" lengthAdjust="spacingAndGlyphs">ConsoleAssy.EASM</text>

<text x="100" y="346.3" font-size="13" fill="#1e1e1e" stroke="#fff" stroke-width=".13" textLength="186" lengthAdjust="spacingAndGlyphs">DisplayConsoleAssembly_RevA.PDF</text>

<path d="M317 464 v16" stroke="#9c9c9c" stroke-width="2.2" stroke-dasharray="1 1"/>
<rect x="359.8" y="180.2" width="14.4" height="12.2" rx="1.4" fill="#fff" stroke="#0b3f74" stroke-width=".9"/><rect x="360.6" y="181" width="4.4" height="10.6" fill="#e8e8e8"/><path d="M365.6 180.4 V192.2" stroke="#2a3a4a" stroke-width=".9"/><path d="M367.9 183.5h4.2 M367.9 185.6h4.2 M367.9 187.6h4.2 M367.9 189.7h4.2" stroke="#4a4a4a" stroke-width="1"/><path d="M377.4 185.6 h6.2 l-3.1 3.8z" fill="#fff" stroke="#0b3f74" stroke-width=".6"/>
<text x="418.6" y="190.9" font-size="12.5" fill="#1a6ac6" textLength="59.4" lengthAdjust="spacingAndGlyphs">PDF Viewer</text>

<path d="M1298.2 186.6 L1301.6 183 L1305 186.6" fill="none" stroke="#4a4a4a" stroke-width="1.6"/>
<rect x="349.4" y="207" width="23.4" height="23.6" rx="1.6" fill="#46557a" stroke="#2c3856" stroke-width=".8"/><rect x="352.6" y="207.6" width="3" height="8.6" fill="#2a3450"/><rect x="355.6" y="207.6" width="8" height="7.6" fill="#c6d6ea"/><rect x="354.2" y="222.2" width="15" height="8.2" fill="#f6f8fb"/><rect x="354.2" y="228.4" width="15" height="2" fill="#3a86d0"/><rect x="362.8" y="203.4" width="12.8" height="15.2" fill="#eceff6" stroke="#7482bc" stroke-width="1"/>
<rect x="386.6" y="211.6" width="29" height="17" rx="2.6" fill="#d6deef" stroke="#6474b0" stroke-width="1"/><rect x="390.4" y="212" width="21.4" height="7.6" rx="1.2" fill="#4a587e"/><rect x="392.8" y="202.8" width="16.6" height="11.6" fill="#e6eaf4" stroke="#7482bc" stroke-width="1"/><rect x="388" y="221" width="26.2" height="3" fill="#f2f5fb"/><rect x="392.6" y="224.8" width="16.6" height="6.4" fill="#4c98da" stroke="#f4f6fb" stroke-width="1.2"/><rect x="392" y="224.2" width="17.8" height="7.6" fill="none" stroke="#6474b0" stroke-width=".8"/>
<circle cx="451" cy="217.8" r="13.8" fill="#e3efc6" stroke="#d4e4b0" stroke-width="1"/><path d="M451 210 L458.6 218.2 H454.2 V224.6 H447.8 V218.2 H443.4 Z" fill="#fff" stroke="#d2e2ae" stroke-width=".8"/>
<circle cx="497" cy="217.8" r="13.6" fill="url(#gGreen)" stroke="#5a8c12" stroke-width="1.2"/><path d="M497 226 L489.4 217.6 H493.8 V211 H500.2 V217.6 H504.6 Z" fill="#fff" stroke="#4a7a0c" stroke-width="1.1"/>
<path d="M533 212 h5.4 v8 h-5.4z" fill="#54648c"/><path d="M526.4 207.4 c.6 -1.6 4.6 -1.6 5.2 0 l2.2 12.6 c.6 6 -11.8 6 -11.2 0 Z" fill="#8a98b8" stroke="#44527a" stroke-width=".9"/><path d="M539.6 207.4 c.6 -1.6 4.6 -1.6 5.2 0 l3.4 12.6 c.6 6 -11.8 6 -11.2 0 Z" fill="#8a98b8" stroke="#44527a" stroke-width=".9"/><path d="M528.4 207.6 l-.8 8 M541.8 207.6 l-.2 8" stroke="#e4e8f2" stroke-width="1.4"/><circle cx="528.2" cy="221.6" r="5.3" fill="#e8ecf6" stroke="#3c4a74" stroke-width="1"/><circle cx="528.2" cy="221.6" r="3.8" fill="url(#gLens)"/><circle cx="543" cy="221.6" r="5.3" fill="#e8ecf6" stroke="#3c4a74" stroke-width="1"/><circle cx="543" cy="221.6" r="3.8" fill="url(#gLens)"/>
<path d="M571.5 203 V217 a1 1 0 0 0 1 1 h19 a1 1 0 0 0 1 -1 V203" fill="#eef1f8" stroke="#6a7ac2" stroke-width="1"/><path d="M576 204h12 M576 206.4h12 M576 208.8h12 M576 211.2h12" stroke="#6a7ac2" stroke-width=".8"/><path d="M571.5 233 V222.6 a1 1 0 0 1 1 -1 h19 a1 1 0 0 1 1 1 V233" fill="#eef1f8" stroke="#6a7ac2" stroke-width="1"/><path d="M576 226.8h12 M576 229.2h12 M576 231.6h12" stroke="#6a7ac2" stroke-width=".8"/>
<path d="M636.8000000000001 222.3 L639.6 225.1" stroke="#5a6aa8" stroke-width="3.2"/><path d="M637.2 222.70000000000002 L639.2 224.70000000000002" stroke="#e8eefa" stroke-width="1.6"/><path d="M639.8000000000001 225.3 L644.8000000000001 229.70000000000002" stroke="#c87818" stroke-width="4.4" stroke-linecap="round"/><path d="M640.0 225.1 L644.6 229.1" stroke="#f4c070" stroke-width="2.2" stroke-linecap="round"/><circle cx="630.2" cy="214.9" r="10.4" fill="#f4f7fd" stroke="#5a6cb0" stroke-width="1"/><circle cx="630.2" cy="214.9" r="7.9" fill="url(#gLens2)" stroke="#4a5ca8" stroke-width="1"/><path d="M626.2 214.9h8 M630.2 210.9v8" stroke="#1a2a80" stroke-width="1.8"/>
<path d="M675.5 222.3 L678.3 225.1" stroke="#5a6aa8" stroke-width="3.2"/><path d="M675.9 222.70000000000002 L677.9 224.70000000000002" stroke="#e8eefa" stroke-width="1.6"/><path d="M678.5 225.3 L683.5 229.70000000000002" stroke="#c87818" stroke-width="4.4" stroke-linecap="round"/><path d="M678.6999999999999 225.1 L683.3 229.1" stroke="#f4c070" stroke-width="2.2" stroke-linecap="round"/><circle cx="668.9" cy="214.9" r="10.4" fill="#f4f7fd" stroke="#5a6cb0" stroke-width="1"/><circle cx="668.9" cy="214.9" r="7.9" fill="url(#gLens2)" stroke="#4a5ca8" stroke-width="1"/><path d="M664.9 214.9h8" stroke="#1a2a80" stroke-width="1.8"/>
<path d="M714.7 222.3 L717.5 225.1" stroke="#5a6aa8" stroke-width="3.2"/><path d="M715.1 222.70000000000002 L717.1 224.70000000000002" stroke="#e8eefa" stroke-width="1.6"/><path d="M717.7 225.3 L722.7 229.70000000000002" stroke="#c87818" stroke-width="4.4" stroke-linecap="round"/><path d="M717.9 225.1 L722.5 229.1" stroke="#f4c070" stroke-width="2.2" stroke-linecap="round"/><circle cx="708.1" cy="214.9" r="10.4" fill="#f4f7fd" stroke="#5a6cb0" stroke-width="1"/><circle cx="708.1" cy="214.9" r="7.9" fill="url(#gLens2)" stroke="#4a5ca8" stroke-width="1"/><ellipse cx="706.5" cy="212.3" rx="4" ry="3.2" fill="#d8e6fa" opacity=".8"/>
<path d="M423.5 201v82 M611.5 201v82 M733.5 201v82" stroke="#d3d3d3" stroke-width="1"/>
<text x="350" y="249.3" font-size="12.4" fill="#1e1e1e" stroke="#fff" stroke-width=".13" textLength="23.7" lengthAdjust="spacingAndGlyphs">Save</text>

<text x="356" y="262.8" font-size="12.4" fill="#1e1e1e" stroke="#fff" stroke-width=".13" textLength="12.3" lengthAdjust="spacingAndGlyphs">As</text>

<text x="389.3" y="249.3" font-size="12.4" fill="#1e1e1e" stroke="#fff" stroke-width=".13" textLength="24.2" lengthAdjust="spacingAndGlyphs">Print</text>

<text x="429.8" y="249.3" font-size="12.4" fill="#b3b3b3" stroke="#fff" stroke-width=".13" textLength="43.6" lengthAdjust="spacingAndGlyphs">Previous</text>

<text x="485.2" y="249.3" font-size="12.4" fill="#1e1e1e" stroke="#fff" stroke-width=".13" textLength="24.3" lengthAdjust="spacingAndGlyphs">Next</text>

<text x="525" y="249.3" font-size="12.4" fill="#1e1e1e" stroke="#fff" stroke-width=".13" textLength="21.8" lengthAdjust="spacingAndGlyphs">Find</text>

<text x="569" y="249.3" font-size="12.4" fill="#1e1e1e" stroke="#fff" stroke-width=".13" textLength="25.6" lengthAdjust="spacingAndGlyphs">Page</text>

<text x="560" y="262.8" font-size="12.4" fill="#1e1e1e" stroke="#fff" stroke-width=".13" textLength="35.2" lengthAdjust="spacingAndGlyphs">Display</text>

<text x="617.9" y="249.3" font-size="12.4" fill="#1e1e1e" stroke="#fff" stroke-width=".13" textLength="29.9" lengthAdjust="spacingAndGlyphs">Zoom</text>

<text x="629" y="262.8" font-size="12.4" fill="#1e1e1e" stroke="#fff" stroke-width=".13" textLength="7.7" lengthAdjust="spacingAndGlyphs">In</text>

<text x="656.7" y="249.3" font-size="12.4" fill="#1e1e1e" stroke="#fff" stroke-width=".13" textLength="30.3" lengthAdjust="spacingAndGlyphs">Zoom</text>

<text x="662.5" y="262.8" font-size="12.4" fill="#1e1e1e" stroke="#fff" stroke-width=".13" textLength="19.7" lengthAdjust="spacingAndGlyphs">Out</text>

<text x="696" y="249.3" font-size="12.4" fill="#1e1e1e" stroke="#fff" stroke-width=".13" textLength="29.9" lengthAdjust="spacingAndGlyphs">Zoom</text>

<text x="373.7" y="281.9" font-size="12.4" fill="#1e1e1e" stroke="#fff" stroke-width=".13" textLength="16.9" lengthAdjust="spacingAndGlyphs">File</text>

<text x="489.4" y="281.9" font-size="12.4" fill="#1e1e1e" stroke="#fff" stroke-width=".13" textLength="56.7" lengthAdjust="spacingAndGlyphs">Navigation</text>

<text x="657.7" y="281.9" font-size="12.4" fill="#1e1e1e" stroke="#fff" stroke-width=".13" textLength="30" lengthAdjust="spacingAndGlyphs">Zoom</text>

<path d="M598.8 257.4 h5.4 l-2.7 3.2z M708.3 257.4 h5.4 l-2.7 3.2z" fill="#222"/>
<path d="M1301 298.6 L1304.5 294.4 L1308 298.6" fill="none" stroke="#5a5a5a" stroke-width="1.8"/><path d="M1301 744 L1304.5 748.2 L1308 744" fill="none" stroke="#5a5a5a" stroke-width="1.8"/><path d="M353.4 760 L349.8 763.6 L353.4 767.2" fill="none" stroke="#b4b4b4" stroke-width="1.4"/><path d="M1285.4 760 L1289 763.6 L1285.4 767.2" fill="none" stroke="#b4b4b4" stroke-width="1.4"/>
</svg>
</body></html>
